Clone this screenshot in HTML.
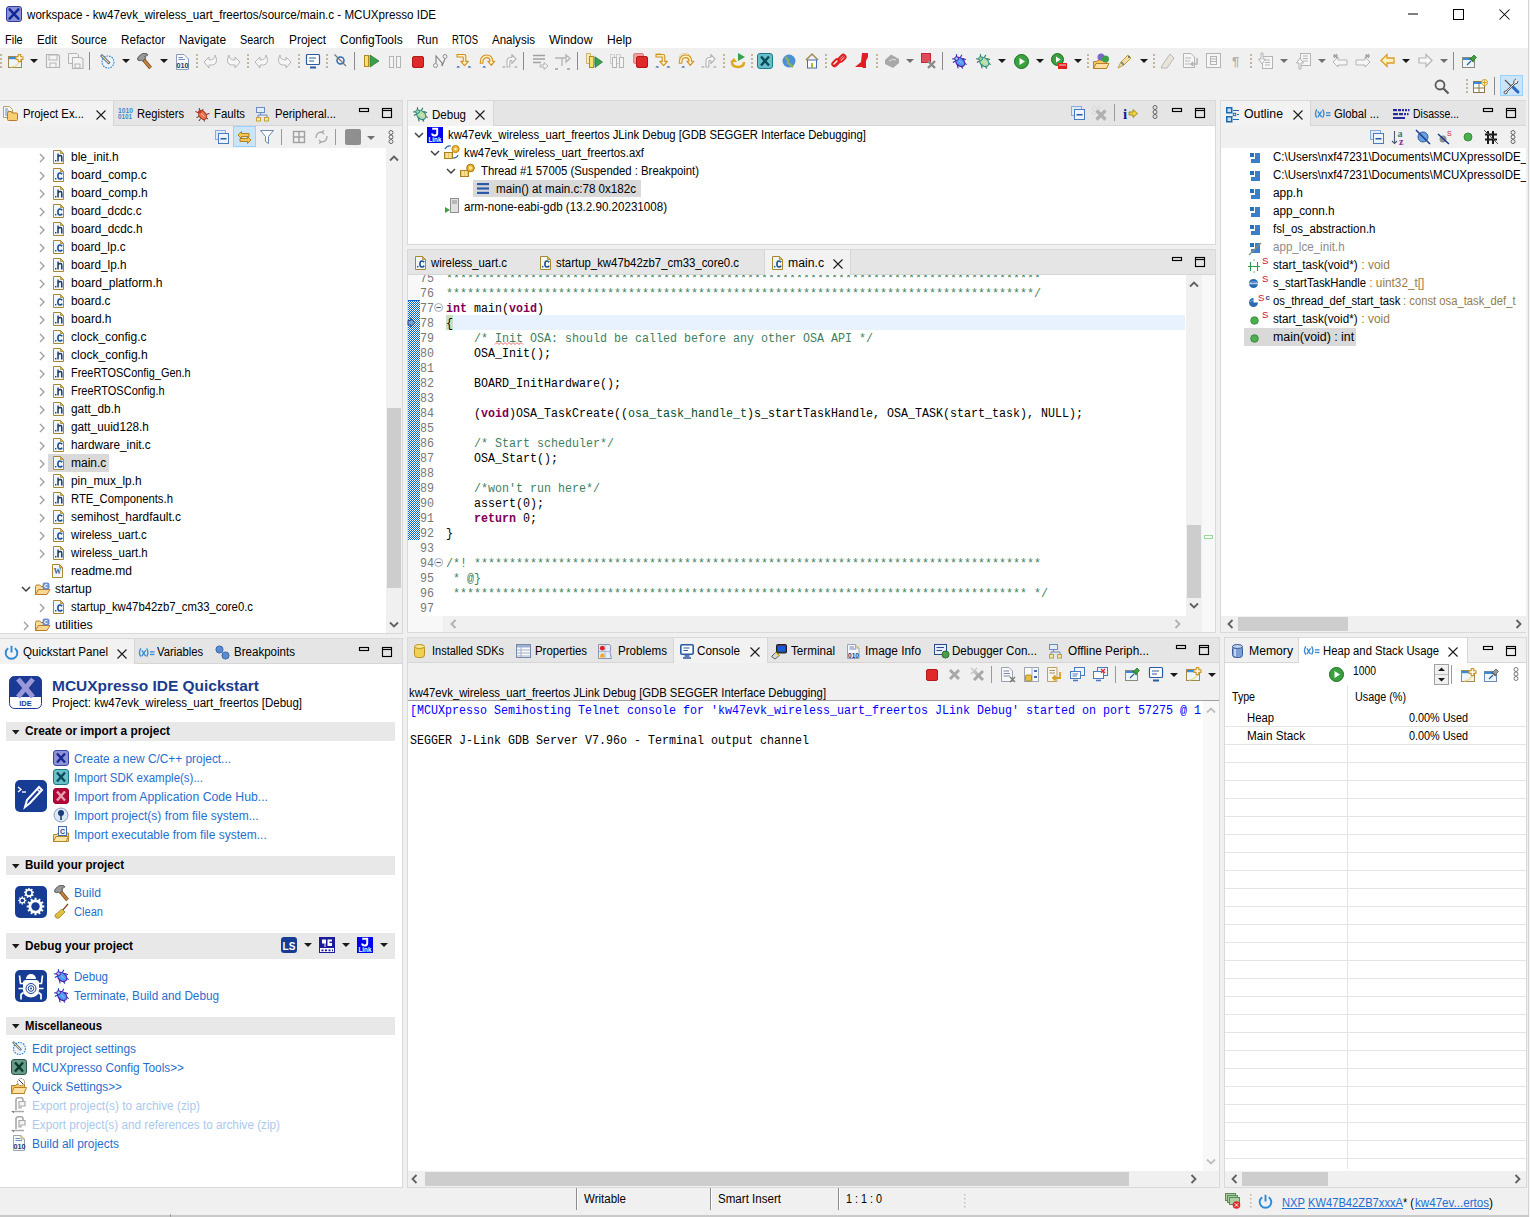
<!DOCTYPE html>
<html><head><meta charset="utf-8"><title>MCUXpresso IDE</title>
<style>
html,body{margin:0;padding:0;}
body{width:1530px;height:1217px;position:relative;overflow:hidden;background:#f0f0f0;font-family:"Liberation Sans",sans-serif;}
body>div,body>svg{position:absolute;}
.t{white-space:pre;line-height:1;transform-origin:0 0;}
svg{overflow:visible;}
</style></head><body>
<div style="left:0px;top:0px;width:1530px;height:48px;background:#ffffff;"></div>
<svg style="left:6px;top:6px;" width="16" height="16" viewBox="0 0 16 16"><rect x="0.5" y="0.5" width="15" height="15" rx="2.5" fill="#8c92d4" stroke="#2c3a9a"/><path d="M3.6 3.4 L12.4 12.6 M12.4 3.4 L3.6 12.6" stroke="#10289a" stroke-width="2.5" stroke-linecap="round"/></svg>
<div class="t" style="left:27px;top:8.84px;font-size:12px;color:#000;font-family:'Liberation Sans', sans-serif;transform:scaleX(0.9674);">workspace - kw47evk_wireless_uart_freertos/source/main.c - MCUXpresso IDE</div>
<svg style="left:1408px;top:13px;" width="10" height="2" viewBox="0 0 10 2"><rect y="0.5" width="10" height="1" fill="#000"/></svg>
<svg style="left:1453px;top:9px;" width="11" height="11" viewBox="0 0 11 11"><rect x="0.5" y="0.5" width="10" height="10" fill="none" stroke="#000"/></svg>
<svg style="left:1499px;top:9px;" width="11" height="11" viewBox="0 0 11 11"><path d="M0.5 0.5 L10.5 10.5 M10.5 0.5 L0.5 10.5" stroke="#000" stroke-width="1.05"/></svg>
<div class="t" style="left:5px;top:33.84px;font-size:12px;color:#000;font-family:'Liberation Sans', sans-serif;transform:scaleX(0.9154);">File</div>
<div class="t" style="left:37px;top:33.84px;font-size:12px;color:#000;font-family:'Liberation Sans', sans-serif;transform:scaleX(0.9672);">Edit</div>
<div class="t" style="left:71px;top:33.84px;font-size:12px;color:#000;font-family:'Liberation Sans', sans-serif;transform:scaleX(0.9390);">Source</div>
<div class="t" style="left:121px;top:33.84px;font-size:12px;color:#000;font-family:'Liberation Sans', sans-serif;transform:scaleX(0.9703);">Refactor</div>
<div class="t" style="left:179px;top:33.84px;font-size:12px;color:#000;font-family:'Liberation Sans', sans-serif;transform:scaleX(0.9924);">Navigate</div>
<div class="t" style="left:240px;top:33.84px;font-size:12px;color:#000;font-family:'Liberation Sans', sans-serif;transform:scaleX(0.9022);">Search</div>
<div class="t" style="left:289px;top:33.84px;font-size:12px;color:#000;font-family:'Liberation Sans', sans-serif;transform:scaleX(0.9907);">Project</div>
<div class="t" style="left:340px;top:33.84px;font-size:12px;color:#000;font-family:'Liberation Sans', sans-serif;">ConfigTools</div>
<div class="t" style="left:417px;top:33.84px;font-size:12px;color:#000;font-family:'Liberation Sans', sans-serif;transform:scaleX(0.9540);">Run</div>
<div class="t" style="left:452px;top:33.84px;font-size:12px;color:#000;font-family:'Liberation Sans', sans-serif;transform:scaleX(0.7903);">RTOS</div>
<div class="t" style="left:492px;top:33.84px;font-size:12px;color:#000;font-family:'Liberation Sans', sans-serif;transform:scaleX(0.9623);">Analysis</div>
<div class="t" style="left:549px;top:33.84px;font-size:12px;color:#000;font-family:'Liberation Sans', sans-serif;transform:scaleX(1.0192);">Window</div>
<div class="t" style="left:607px;top:33.84px;font-size:12px;color:#000;font-family:'Liberation Sans', sans-serif;transform:scaleX(1.0049);">Help</div>
<svg style="left:0px;top:54px;" width="2" height="16" viewBox="0 0 2 16"><rect x="0" y="0" width="2" height="2" fill="#c2b59a"/><rect x="0" y="4" width="2" height="2" fill="#c2b59a"/><rect x="0" y="8" width="2" height="2" fill="#c2b59a"/><rect x="0" y="12" width="2" height="2" fill="#c2b59a"/></svg>
<svg style="left:8px;top:54px;" width="16" height="15" viewBox="0 0 16 15"><rect x="0.5" y="2.5" width="13" height="11" fill="#eef6fc" stroke="#a08a4a"/><rect x="1" y="3" width="12" height="2.2" fill="#3a8ad8"/><path d="M3 13 Q10 12.5 12 6" fill="none" stroke="#f0dc98" stroke-width="1.2"/><path d="M10.2 0.6 H12.8 V2.8 H15 V5.4 H12.8 V7.6 H10.2 V5.4 H8 V2.8 H10.2 Z" fill="#fffbe8" stroke="#c8982a" stroke-width="1.1" stroke-linejoin="round"/></svg>
<svg style="left:30px;top:59px;" width="8" height="4" viewBox="0 0 8 4"><path d="M0 0 H8 L4 4 Z" fill="#1a1a1a"/></svg>
<svg style="left:45px;top:53px;" width="16" height="16" viewBox="0 0 16 16"><path d="M1.5 1.5 H13 L14.5 3 V14.5 H1.5 Z" fill="#f4f4f4" stroke="#b4b4b4" stroke-width="1.2"/><rect x="4" y="2" width="8" height="5" fill="none" stroke="#b4b4b4"/><rect x="5" y="10" width="6" height="4.5" fill="none" stroke="#b4b4b4"/></svg>
<svg style="left:68px;top:53px;" width="16" height="16" viewBox="0 0 16 16"><path d="M0.5 0.5 H9 L10.5 2 V10.5 H0.5 Z" fill="#f4f4f4" stroke="#b4b4b4"/><path d="M4.5 4.5 H13 L15 6 V15.5 H4.5 Z" fill="#f4f4f4" stroke="#b4b4b4" stroke-width="1.1"/><rect x="7" y="11" width="5" height="4" fill="none" stroke="#b4b4b4"/></svg>
<div style="left:89px;top:52px;width:1px;height:18px;background:#8a8a8a;"></div>
<svg style="left:100px;top:54px;" width="15" height="15" viewBox="0 0 15 15"><circle cx="8" cy="8" r="6" fill="#eef4fa" stroke="#3a8ad0" stroke-width="1.2" stroke-dasharray="1.6 1"/><path d="M1 1 L9.5 9.5" stroke="#2a4a8a" stroke-width="2.6"/><path d="M1.5 1.5 L9 9" stroke="#f0e090" stroke-width="1.2"/></svg>
<svg style="left:122px;top:59px;" width="8" height="4" viewBox="0 0 8 4"><path d="M0 0 H8 L4 4 Z" fill="#1a1a1a"/></svg>
<svg style="left:137px;top:53px;" width="17" height="17" viewBox="0 0 17 17"><path d="M6.5 6.5 L13.5 15" stroke="#7a4a1a" stroke-width="3.6"/><path d="M6.5 6.5 L13.5 15" stroke="#c08040" stroke-width="2.2"/><path d="M0.8 7 Q0 5 2 3.2 L4.8 0.9 Q7 0.2 10 0.8 L11 1.8 Q9.5 3.2 7.8 3.4 L8.6 5.2 L5.6 8.2 L4.2 7 Q2.5 8.4 0.8 7 Z" fill="#9a9a9a" stroke="#4a4a4a" stroke-width="0.9"/></svg>
<svg style="left:160px;top:59px;" width="8" height="4" viewBox="0 0 8 4"><path d="M0 0 H8 L4 4 Z" fill="#1a1a1a"/></svg>
<svg style="left:176px;top:54px;" width="13" height="16" viewBox="0 0 13 16"><path d="M0.5 0.5 H8 L12.5 5 V15.5 H0.5 Z" fill="#fafafa" stroke="#8a9ab8"/><path d="M2.5 3.5 H7 M2.5 5.5 H9" stroke="#6a8ac0"/><text x="0.5" y="14" font-size="7.5" font-weight="bold" font-family="Liberation Sans" fill="#1a3a6a" textLength="12" lengthAdjust="spacingAndGlyphs">010</text></svg>
<svg style="left:196px;top:54px;" width="2" height="16" viewBox="0 0 2 16"><rect x="0" y="0" width="2" height="2" fill="#c2b59a"/><rect x="0" y="4" width="2" height="2" fill="#c2b59a"/><rect x="0" y="8" width="2" height="2" fill="#c2b59a"/><rect x="0" y="12" width="2" height="2" fill="#c2b59a"/></svg>
<svg style="left:203px;top:53px;" width="16" height="16" viewBox="0 0 16 16"><path d="M1 9 L6 4 V7 Q12 7 12 2 Q15 8 12 11 Q10 12.5 6 12 V15 Z" fill="#f6f6f6" stroke="#b4b4b4"/></svg>
<svg style="left:225px;top:53px;" width="16" height="16" viewBox="0 0 16 16"><path d="M15 9 L10 4 V7 Q4 7 4 2 Q1 8 4 11 Q6 12.5 10 12 V15 Z" fill="#f6f6f6" stroke="#b4b4b4"/></svg>
<svg style="left:247px;top:54px;" width="2" height="16" viewBox="0 0 2 16"><rect x="0" y="0" width="2" height="2" fill="#c2b59a"/><rect x="0" y="4" width="2" height="2" fill="#c2b59a"/><rect x="0" y="8" width="2" height="2" fill="#c2b59a"/><rect x="0" y="12" width="2" height="2" fill="#c2b59a"/></svg>
<svg style="left:254px;top:53px;" width="16" height="16" viewBox="0 0 16 16"><path d="M1 9 L6 4 V7 Q12 7 12 2 Q15 8 12 11 Q10 12.5 6 12 V15 Z" fill="#f6f6f6" stroke="#b4b4b4"/></svg>
<svg style="left:276px;top:53px;" width="16" height="16" viewBox="0 0 16 16"><path d="M15 9 L10 4 V7 Q4 7 4 2 Q1 8 4 11 Q6 12.5 10 12 V15 Z" fill="#f6f6f6" stroke="#b4b4b4"/></svg>
<svg style="left:298px;top:54px;" width="2" height="16" viewBox="0 0 2 16"><rect x="0" y="0" width="2" height="2" fill="#c2b59a"/><rect x="0" y="4" width="2" height="2" fill="#c2b59a"/><rect x="0" y="8" width="2" height="2" fill="#c2b59a"/><rect x="0" y="12" width="2" height="2" fill="#c2b59a"/></svg>
<svg style="left:306px;top:54px;" width="14" height="15" viewBox="0 0 14 15"><rect x="0.5" y="0.5" width="13" height="10" rx="1" fill="#fff" stroke="#2a5aa0" stroke-width="1.2"/><path d="M3 4 H10 M3 7 H8" stroke="#2a5aa0"/><path d="M4 13.5 H10" stroke="#2a5aa0" stroke-width="2"/></svg>
<svg style="left:326px;top:54px;" width="2" height="16" viewBox="0 0 2 16"><rect x="0" y="0" width="2" height="2" fill="#c2b59a"/><rect x="0" y="4" width="2" height="2" fill="#c2b59a"/><rect x="0" y="8" width="2" height="2" fill="#c2b59a"/><rect x="0" y="12" width="2" height="2" fill="#c2b59a"/></svg>
<svg style="left:334px;top:54px;" width="13" height="13" viewBox="0 0 13 13"><circle cx="6.5" cy="6.5" r="3.5" fill="none" stroke="#2a6ab8" stroke-width="1.5"/><path d="M0.5 0.5 L12 12" stroke="#7a7a7a" stroke-width="1.2"/></svg>
<div style="left:354px;top:52px;width:1px;height:18px;background:#8a8a8a;"></div>
<svg style="left:364px;top:54px;" width="16" height="14" viewBox="0 0 16 14"><rect x="0.5" y="1.5" width="4" height="11" fill="#f8e070" stroke="#b08a20"/><path d="M6 1 L15 7 L6 13 Z" fill="#3aa050" stroke="#1a7030" stroke-width="0.7"/></svg>
<svg style="left:389px;top:56px;" width="12" height="12" viewBox="0 0 12 12"><rect x="0.5" y="0.5" width="4" height="11" fill="#f4f4f4" stroke="#b4b4b4"/><rect x="7.5" y="0.5" width="4" height="11" fill="#f4f4f4" stroke="#b4b4b4"/></svg>
<svg style="left:412px;top:56px;" width="12" height="12" viewBox="0 0 12 12"><rect x="0.5" y="0.5" width="11" height="11" rx="1.5" fill="#e02a2a" stroke="#b01a1a"/></svg>
<svg style="left:433px;top:54px;" width="15" height="14" viewBox="0 0 15 14"><circle cx="2.5" cy="11.5" r="2" fill="none" stroke="#909090"/><circle cx="12" cy="2.5" r="2" fill="none" stroke="#909090"/><path d="M3 9 V2 L9 9 V12 L12 5" fill="none" stroke="#808080" stroke-width="1.1"/></svg>
<svg style="left:456px;top:53px;" width="16" height="16" viewBox="0 0 16 16"><path d="M1 1.5 H8.2 Q9.8 1.5 9.8 3.1 V8.4 H12.4 L8.6 12.6 L4.8 8.4 H7.2 V4 H1 Z" fill="#fff0c0" stroke="#d09020" stroke-width="1.1" stroke-linejoin="round"/><path d="M0.3 14.6 Q2.2 11.4 4.1 14.6 Z M11.5 14.6 Q13.4 11.4 15.3 14.6 Z" fill="#2a5a9a"/></svg>
<svg style="left:479px;top:53px;" width="16" height="16" viewBox="0 0 16 16"><path d="M1.2 10.2 Q1.2 2 7.6 2 Q13.6 2 13.6 8.2 H15.8 L12.3 12.4 L8.8 8.2 H11 Q11 4.6 7.6 4.6 Q3.8 4.6 3.8 10.2 Z" fill="#fff0c0" stroke="#d09020" stroke-width="1.1" stroke-linejoin="round"/><path d="M3.3 14.6 Q5.2 11.4 7.1 14.6 Z" fill="#2a5a9a"/></svg>
<svg style="left:502px;top:53px;" width="16" height="16" viewBox="0 0 16 16"><path d="M5 14 V8 Q5 4.5 8.5 4.5 H9.8 V1.5 L14 6 L9.8 10.5 V7.3 H8.8 Q7.8 7.3 7.8 8.3 V14 Z" fill="#fafafa" stroke="#b4b4b4" stroke-width="1.1" stroke-linejoin="round"/><path d="M0 14.6 Q1.9 11.4 3.8 14.6 Z M12 14.6 Q13.9 11.4 15.8 14.6 Z" fill="#a8a8a8"/></svg>
<div style="left:523px;top:52px;width:1px;height:18px;background:#8a8a8a;"></div>
<svg style="left:533px;top:54px;" width="16" height="16" viewBox="0 0 16 16"><path d="M0 1.5 H12 M0 5 H12 M0 8.5 H8" stroke="#a0a0a0" stroke-width="1.6"/><path d="M7 11 H11 V8.5 L15 12 L11 15.5 V13 H7 Z" fill="#f4f4f4" stroke="#b4b4b4"/></svg>
<svg style="left:555px;top:54px;" width="16" height="16" viewBox="0 0 16 16"><path d="M0 4 H7 V12 M7 4 H11 V1 L15 4.5 L11 8 V5" fill="none" stroke="#b4b4b4" stroke-width="1.3"/><path d="M0 15 H3 M12 15 H15" stroke="#a0a0a0" stroke-width="1.5"/></svg>
<div style="left:577px;top:52px;width:1px;height:18px;background:#8a8a8a;"></div>
<svg style="left:586px;top:53px;" width="17" height="16" viewBox="0 0 17 16"><rect x="0.5" y="0.5" width="4" height="10" fill="#f8e8a0" stroke="#c0a050" opacity="0.7"/><rect x="3.5" y="3.5" width="4" height="11" fill="#f8e070" stroke="#b08a20"/><path d="M7 2 L15 7.5 L7 13 Z" fill="#8ac090" opacity="0.6"/><path d="M9 4 L16.5 9 L9 14.5 Z" fill="#3aa050" stroke="#1a7030" stroke-width="0.7"/></svg>
<svg style="left:610px;top:54px;" width="14" height="14" viewBox="0 0 14 14"><rect x="0.5" y="0.5" width="4" height="9" fill="none" stroke="#d0d0d0"/><rect x="6.5" y="0.5" width="4" height="9" fill="none" stroke="#d0d0d0"/><rect x="2.5" y="3.5" width="4" height="10" fill="#f4f4f4" stroke="#b4b4b4"/><rect x="9.5" y="3.5" width="4" height="10" fill="#f4f4f4" stroke="#b4b4b4"/></svg>
<svg style="left:633px;top:53px;" width="15" height="15" viewBox="0 0 15 15"><rect x="0.5" y="0.5" width="10" height="10" rx="1.5" fill="#f0a0a0" stroke="#e08080"/><rect x="3.5" y="3.5" width="11" height="11" rx="1.5" fill="#e02a2a" stroke="#b01a1a"/></svg>
<svg style="left:655px;top:53px;" width="16" height="16" viewBox="0 0 16 16"><path d="M0.5 0.5 H6" stroke="#d09020" stroke-width="0.8" opacity="0.5"/><path d="M1 1.5 H8.2 Q9.8 1.5 9.8 3.1 V8.4 H12.4 L8.6 12.6 L4.8 8.4 H7.2 V4 H1 Z" fill="#fff0c0" stroke="#d09020" stroke-width="1.1" stroke-linejoin="round"/><path d="M0.3 14.6 Q2.2 11.4 4.1 14.6 Z M11.5 14.6 Q13.4 11.4 15.3 14.6 Z" fill="#2a5a9a"/></svg>
<svg style="left:678px;top:53px;" width="16" height="16" viewBox="0 0 16 16"><path d="M1 6 Q1 0.5 7 0.5 Q12 0.5 13 4" fill="none" stroke="#d09020" stroke-width="0.8" opacity="0.5"/><path d="M1.2 10.2 Q1.2 2 7.6 2 Q13.6 2 13.6 8.2 H15.8 L12.3 12.4 L8.8 8.2 H11 Q11 4.6 7.6 4.6 Q3.8 4.6 3.8 10.2 Z" fill="#fff0c0" stroke="#d09020" stroke-width="1.1" stroke-linejoin="round"/><path d="M3.3 14.6 Q5.2 11.4 7.1 14.6 Z" fill="#2a5a9a"/></svg>
<svg style="left:701px;top:53px;" width="16" height="16" viewBox="0 0 16 16"><path d="M5 14 V8 Q5 4.5 8.5 4.5 H9.8 V1.5 L14 6 L9.8 10.5 V7.3 H8.8 Q7.8 7.3 7.8 8.3 V14 Z" fill="#fafafa" stroke="#b4b4b4" stroke-width="1.1" stroke-linejoin="round"/><path d="M0 14.6 Q1.9 11.4 3.8 14.6 Z M12 14.6 Q13.9 11.4 15.8 14.6 Z" fill="#a8a8a8"/></svg>
<svg style="left:723px;top:54px;" width="2" height="16" viewBox="0 0 2 16"><rect x="0" y="0" width="2" height="2" fill="#c2b59a"/><rect x="0" y="4" width="2" height="2" fill="#c2b59a"/><rect x="0" y="8" width="2" height="2" fill="#c2b59a"/><rect x="0" y="12" width="2" height="2" fill="#c2b59a"/></svg>
<svg style="left:730px;top:53px;" width="16" height="16" viewBox="0 0 16 16"><path d="M2 9 Q2 14 8 14 Q14 14 14 9" fill="none" stroke="#e0a820" stroke-width="2.5"/><path d="M0 9 L4 5 L7 9 Z" fill="#e0a820"/><path d="M8 0 L15 4 L8 8 Z" fill="#3aa050"/></svg>
<svg style="left:751px;top:54px;" width="2" height="16" viewBox="0 0 2 16"><rect x="0" y="0" width="2" height="2" fill="#c2b59a"/><rect x="0" y="4" width="2" height="2" fill="#c2b59a"/><rect x="0" y="8" width="2" height="2" fill="#c2b59a"/><rect x="0" y="12" width="2" height="2" fill="#c2b59a"/></svg>
<svg style="left:757px;top:53px;" width="16" height="16" viewBox="0 0 16 16"><rect x="0.5" y="0.5" width="15" height="15" rx="2.5" fill="#68c0c8" stroke="#1a7a8a"/><path d="M4 3.5 L12 12.5 M12 3.5 L4 12.5" stroke="#0a4a5a" stroke-width="2.4"/></svg>
<svg style="left:782px;top:54px;" width="14" height="14" viewBox="0 0 14 14"><circle cx="7" cy="7" r="6.5" fill="#4a90d8"/><path d="M3 3 Q7 5 6 9 Q9 11 11 13" fill="none" stroke="#8ab060" stroke-width="2.5"/></svg>
<svg style="left:805px;top:53px;" width="14" height="16" viewBox="0 0 14 16"><path d="M1 7 L7 1 L13 7" fill="none" stroke="#a08a5a" stroke-width="1.5"/><rect x="2.5" y="7" width="9" height="8" fill="#fff" stroke="#4a6ab0"/><rect x="6" y="10" width="2" height="5" fill="#a0c030"/></svg>
<svg style="left:825px;top:54px;" width="2" height="16" viewBox="0 0 2 16"><rect x="0" y="0" width="2" height="2" fill="#c2b59a"/><rect x="0" y="4" width="2" height="2" fill="#c2b59a"/><rect x="0" y="8" width="2" height="2" fill="#c2b59a"/><rect x="0" y="12" width="2" height="2" fill="#c2b59a"/></svg>
<svg style="left:831px;top:53px;" width="16" height="16" viewBox="0 0 16 16"><path d="M3 13 L13 3" stroke="#e02020" stroke-width="1.5"/><rect x="0.8" y="7.5" width="8" height="4.5" rx="2.2" transform="rotate(-45 4.8 9.75)" fill="none" stroke="#e02020" stroke-width="2"/><rect x="7" y="3" width="8" height="4.5" rx="2.2" transform="rotate(-45 11 5.25)" fill="none" stroke="#e02020" stroke-width="2"/></svg>
<svg style="left:855px;top:53px;" width="14" height="16" viewBox="0 0 14 16"><path d="M7 0 H13 V4 L11 8 V15 H8 L7 14 H0 L6 9 Z" fill="#e02020"/></svg>
<svg style="left:876px;top:54px;" width="2" height="16" viewBox="0 0 2 16"><rect x="0" y="0" width="2" height="2" fill="#c2b59a"/><rect x="0" y="4" width="2" height="2" fill="#c2b59a"/><rect x="0" y="8" width="2" height="2" fill="#c2b59a"/><rect x="0" y="12" width="2" height="2" fill="#c2b59a"/></svg>
<svg style="left:884px;top:54px;" width="16" height="14" viewBox="0 0 16 14"><path d="M1 6 L7 0.5 L15 5 L15 9 L9 14 L1 10 Z" fill="#a8a8a8"/><path d="M5 7 Q9 4 12 6" stroke="#e0e0e0" fill="none"/></svg>
<svg style="left:906px;top:59px;" width="8" height="4" viewBox="0 0 8 4"><path d="M0 0 H8 L4 4 Z" fill="#707070"/></svg>
<svg style="left:921px;top:53px;" width="15" height="16" viewBox="0 0 15 16"><rect x="0.5" y="0.5" width="9" height="9" fill="#e04a5a" stroke="#c02a3a"/><path d="M7 8 L14 15 M14 8 L7 15" stroke="#8a8a8a" stroke-width="2.4"/></svg>
<div style="left:942px;top:52px;width:1px;height:18px;background:#8a8a8a;"></div>
<svg style="left:952px;top:54px;" width="15" height="15" viewBox="0 0 15 15"><g stroke="#2a40c0" stroke-width="1.2" stroke-linecap="round" fill="none"><path d="M4.5 3 V0.6 M8.5 3.2 L9.6 1.2 M3 4.8 H0.6 M3.5 7 L1.3 8.3 M10.8 4.6 L13.6 5.5 M12 8.6 L14.2 10.4 M5.2 10.2 L6 14 M9.2 11.6 L10.6 14.2"/></g><ellipse cx="8.2" cy="8" rx="3.9" ry="5.2" transform="rotate(-45 8.2 8)" fill="#4a9cf0" stroke="#5a10a8" stroke-width="1.1"/><path d="M7 6.5 L10 9.5" stroke="#ffffff" stroke-opacity="0.45" stroke-width="1"/><circle cx="4.6" cy="4.6" r="1.9" fill="#8ac8ff" stroke="#5a10a8" stroke-width="1"/></svg>
<svg style="left:976px;top:54px;" width="15" height="15" viewBox="0 0 15 15"><g stroke="#3a7a5a" stroke-width="1.2" stroke-linecap="round" fill="none"><path d="M4.5 3 V0.6 M8.5 3.2 L9.6 1.2 M3 4.8 H0.6 M3.5 7 L1.3 8.3 M10.8 4.6 L13.6 5.5 M12 8.6 L14.2 10.4 M5.2 10.2 L6 14 M9.2 11.6 L10.6 14.2"/></g><ellipse cx="8.2" cy="8" rx="3.9" ry="5.2" transform="rotate(-45 8.2 8)" fill="#b8dca8" stroke="#2a8a8a" stroke-width="1.1"/><path d="M7 6.5 L10 9.5" stroke="#ffffff" stroke-opacity="0.45" stroke-width="1"/><circle cx="4.6" cy="4.6" r="1.9" fill="#a0d890" stroke="#2a8a8a" stroke-width="1"/></svg>
<svg style="left:998px;top:59px;" width="8" height="4" viewBox="0 0 8 4"><path d="M0 0 H8 L4 4 Z" fill="#1a1a1a"/></svg>
<svg style="left:1014px;top:54px;" width="15" height="15" viewBox="0 0 15 15"><circle cx="7.5" cy="7.5" r="7" fill="#3aa040" stroke="#1a7020"/><path d="M5.5 4 L11 7.5 L5.5 11 Z" fill="#fff"/></svg>
<svg style="left:1036px;top:59px;" width="8" height="4" viewBox="0 0 8 4"><path d="M0 0 H8 L4 4 Z" fill="#1a1a1a"/></svg>
<svg style="left:1051px;top:53px;" width="17" height="16" viewBox="0 0 17 16"><circle cx="6.5" cy="6.5" r="6" fill="#3aa040" stroke="#1a7020"/><path d="M5 3.5 L9.5 6.5 L5 9.5 Z" fill="#fff"/><rect x="7" y="10" width="9" height="6" fill="#e02020"/><path d="M8 12 H15" stroke="#fff" stroke-width="0.8"/></svg>
<svg style="left:1074px;top:59px;" width="8" height="4" viewBox="0 0 8 4"><path d="M0 0 H8 L4 4 Z" fill="#1a1a1a"/></svg>
<svg style="left:1087px;top:54px;" width="2" height="16" viewBox="0 0 2 16"><rect x="0" y="0" width="2" height="2" fill="#c2b59a"/><rect x="0" y="4" width="2" height="2" fill="#c2b59a"/><rect x="0" y="8" width="2" height="2" fill="#c2b59a"/><rect x="0" y="12" width="2" height="2" fill="#c2b59a"/></svg>
<svg style="left:1093px;top:53px;" width="17" height="16" viewBox="0 0 17 16"><path d="M0.5 8.5 H4 L5 7 H13.5 V15.5 H0.5 Z" fill="#f5c860" stroke="#b8802a"/><path d="M0.5 15.5 L3 10.5 H16 L13.5 15.5 Z" fill="#fbe0a0" stroke="#b8802a"/><circle cx="8" cy="4" r="3.5" fill="#7a6ac8"/><circle cx="12.5" cy="6" r="3.5" fill="#3aa050"/></svg>
<svg style="left:1117px;top:53px;" width="16" height="16" viewBox="0 0 16 16"><path d="M1 15 L4 9 L11 2 L14 5 L7 12 Z" fill="#f0e0a0" stroke="#c0a050"/><path d="M4 9 L7 12" stroke="#8a8a8a" stroke-width="2"/><circle cx="12" cy="4" r="1" fill="#5a5a5a"/></svg>
<svg style="left:1140px;top:59px;" width="8" height="4" viewBox="0 0 8 4"><path d="M0 0 H8 L4 4 Z" fill="#1a1a1a"/></svg>
<svg style="left:1153px;top:54px;" width="2" height="16" viewBox="0 0 2 16"><rect x="0" y="0" width="2" height="2" fill="#c2b59a"/><rect x="0" y="4" width="2" height="2" fill="#c2b59a"/><rect x="0" y="8" width="2" height="2" fill="#c2b59a"/><rect x="0" y="12" width="2" height="2" fill="#c2b59a"/></svg>
<svg style="left:1159px;top:53px;" width="16" height="16" viewBox="0 0 16 16"><path d="M2 15 H8 L15 5 L11 1 L4 11 Z" fill="#e8e4d8" stroke="#b8b8b8"/></svg>
<svg style="left:1183px;top:53px;" width="16" height="16" viewBox="0 0 16 16"><path d="M0.5 0.5 H8 L11.5 4 V14.5 H0.5 Z" fill="#f6f6f6" stroke="#b4b4b4"/><path d="M2 5 H8 M2 8 H7 M2 11 H7" stroke="#b4b4b4"/><path d="M14 5 V11 H8 M10 9 L8 11 L10 13" fill="none" stroke="#b4b4b4" stroke-width="1.5"/></svg>
<svg style="left:1206px;top:53px;" width="15" height="16" viewBox="0 0 15 16"><rect x="0.5" y="0.5" width="14" height="14" fill="#f6f6f6" stroke="#b4b4b4"/><rect x="4.5" y="3.5" width="6" height="8" fill="none" stroke="#b4b4b4"/><path d="M5 6 H10 M5 8.5 H10" stroke="#b4b4b4"/></svg>
<svg style="left:1232px;top:55px;" width="9" height="12" viewBox="0 0 9 12"><text x="0" y="11" font-size="13" font-family="Liberation Sans" font-weight="bold" fill="#b0b0b0">¶</text></svg>
<svg style="left:1250px;top:54px;" width="2" height="16" viewBox="0 0 2 16"><rect x="0" y="0" width="2" height="2" fill="#c2b59a"/><rect x="0" y="4" width="2" height="2" fill="#c2b59a"/><rect x="0" y="8" width="2" height="2" fill="#c2b59a"/><rect x="0" y="12" width="2" height="2" fill="#c2b59a"/></svg>
<svg style="left:1258px;top:53px;" width="15" height="16" viewBox="0 0 15 16"><rect x="4.5" y="3.5" width="10" height="12" fill="#f6f6f6" stroke="#b4b4b4"/><path d="M7 7 H12 M7 9.5 H12 M7 12 H12" stroke="#b4b4b4"/><path d="M3 0 V6 H0.5 L4 11 L7.5 6 H5 V0 Z" fill="#f6f6f6" stroke="#b4b4b4"/></svg>
<svg style="left:1280px;top:59px;" width="8" height="4" viewBox="0 0 8 4"><path d="M0 0 H8 L4 4 Z" fill="#707070"/></svg>
<svg style="left:1296px;top:53px;" width="15" height="16" viewBox="0 0 15 16"><rect x="4.5" y="0.5" width="10" height="12" fill="#f6f6f6" stroke="#b4b4b4"/><path d="M7 3 H12 M7 5.5 H12 M7 8 H12" stroke="#b4b4b4"/><path d="M3 16 V10 H0.5 L4 5 L7.5 10 H5 V16 Z" fill="#f6f6f6" stroke="#b4b4b4"/></svg>
<svg style="left:1318px;top:59px;" width="8" height="4" viewBox="0 0 8 4"><path d="M0 0 H8 L4 4 Z" fill="#707070"/></svg>
<svg style="left:1332px;top:53px;" width="16" height="16" viewBox="0 0 16 16"><path d="M1 9 L6 4 V7 H15 V12 H6 V14 Z" fill="#f6f6f6" stroke="#b4b4b4"/><path d="M2 1 L5 5 M5 1 L2 5 M1 3 H6" stroke="#909090"/></svg>
<svg style="left:1355px;top:53px;" width="16" height="16" viewBox="0 0 16 16"><path d="M15 9 L10 4 V7 H1 V12 H10 V14 Z" fill="#f6f6f6" stroke="#b4b4b4"/><path d="M11 1 L14 5 M14 1 L11 5 M10 3 H15" stroke="#909090"/></svg>
<svg style="left:1380px;top:53px;" width="15" height="15" viewBox="0 0 15 15"><path d="M1 7.5 L7 1.5 V5 H14 V10 H7 V13.5 Z" fill="#fff0c0" stroke="#d8a020" stroke-width="1.3"/></svg>
<svg style="left:1402px;top:59px;" width="8" height="4" viewBox="0 0 8 4"><path d="M0 0 H8 L4 4 Z" fill="#1a1a1a"/></svg>
<svg style="left:1418px;top:53px;" width="15" height="15" viewBox="0 0 15 15"><path d="M14 7.5 L8 1.5 V5 H1 V10 H8 V13.5 Z" fill="#f8f8f8" stroke="#b4b4b4" stroke-width="1.2"/></svg>
<svg style="left:1440px;top:59px;" width="8" height="4" viewBox="0 0 8 4"><path d="M0 0 H8 L4 4 Z" fill="#707070"/></svg>
<div style="left:1453px;top:52px;width:1px;height:18px;background:#8a8a8a;"></div>
<svg style="left:1462px;top:54px;" width="15" height="15" viewBox="0 0 15 15"><rect x="0.5" y="3.5" width="12" height="10" fill="#eef6fc" stroke="#8a8a7a"/><rect x="1" y="4" width="11" height="2" fill="#3a8ad8"/><path d="M5 11 L9 7" stroke="#2a5a9a" stroke-width="1.1"/><path d="M8.5 4.5 L12 1 L14.5 3.5 L11 7 Z" fill="#3aa040" stroke="#2a7a2a" stroke-width="0.8"/><path d="M7.5 3.8 L11.7 8" stroke="#2a7a2a" stroke-width="1.2"/></svg>
<svg style="left:1434px;top:79px;" width="16" height="16" viewBox="0 0 16 16"><circle cx="6" cy="6" r="4.5" fill="none" stroke="#5a5a5a" stroke-width="1.8"/><path d="M9.5 9.5 L14.5 14.5" stroke="#5a5a5a" stroke-width="2.2"/></svg>
<svg style="left:1466px;top:79px;" width="2" height="16" viewBox="0 0 2 16"><rect x="0" y="0" width="2" height="2" fill="#c2b59a"/><rect x="0" y="4" width="2" height="2" fill="#c2b59a"/><rect x="0" y="8" width="2" height="2" fill="#c2b59a"/><rect x="0" y="12" width="2" height="2" fill="#c2b59a"/></svg>
<svg style="left:1473px;top:79px;" width="15" height="15" viewBox="0 0 15 15"><rect x="0.5" y="2.5" width="11" height="11" fill="#fff" stroke="#8a7a4a"/><rect x="1" y="3" width="10" height="2" fill="#3a8ad8"/><path d="M6 5 V13 M1 9 H11" stroke="#8a7a4a"/><circle cx="11.5" cy="3.5" r="3" fill="#fff4c0" stroke="#c8a030"/><path d="M11.5 1.5 V5.5 M9.5 3.5 H13.5" stroke="#c8a030"/></svg>
<div style="left:1494px;top:77px;width:1px;height:18px;background:#8a8a8a;"></div>
<div style="left:1500px;top:75px;width:23px;height:21px;background:#cce4f7;box-shadow:inset 0 0 0 1px #99d1ff;"></div>
<svg style="left:1503px;top:78px;" width="17" height="16" viewBox="0 0 17 16"><path d="M2 2 L14 14" stroke="#5a5a5a" stroke-width="1.2"/><path d="M9 8 L15 14" stroke="#2a6ad0" stroke-width="3" stroke-linecap="round"/><path d="M13 1 A3 3 0 0 0 11 5 L3 13 A1.5 1.5 0 1 0 4 14 L12 6 A3 3 0 0 0 15 3" fill="#e8e8e8" stroke="#5a5a5a"/></svg>
<div style="left:0px;top:100px;width:403px;height:534px;background:#d9d9d9;"></div>
<div style="left:1px;top:101px;width:401px;height:532px;background:#ffffff;"></div>
<div style="left:1px;top:101px;width:401px;height:24px;background:#e5e5e5;"></div>
<div style="left:-1px;top:100px;width:404px;height:534px;background:#d9d9d9;"></div>
<div style="left:0px;top:101px;width:402px;height:532px;background:#ffffff;"></div>
<div style="left:0px;top:101px;width:402px;height:25px;background:#e5e5e5;"></div>
<div style="left:0px;top:101px;width:113px;height:25px;background:#f2f2f2;"></div>
<div style="left:113px;top:101px;width:1px;height:25px;background:#d6d6d6;"></div>
<div style="left:113px;top:125px;width:289px;height:1px;background:#d6d6d6;"></div>
<div style="left:0px;top:126px;width:402px;height:22px;background:#f0f0f0;"></div>
<svg style="left:3px;top:106px;" width="16" height="16" viewBox="0 0 16 16"><path d="M0.5 0.5 H6.5 L9.5 3.5 V11.5 H0.5 Z" fill="#f8f8fa" stroke="#b8a070"/><path d="M2 3 H5 M2 5 H6 M2 7 H6 M2 9 H5" stroke="#6a8ad0"/><path d="M4.5 7.5 Q4.5 5.5 6 5.5 H8 Q9 5.5 9 7 H13.5 Q14.5 7 14.5 8 V13.5 Q14.5 14.5 13.5 14.5 H5.5 Q4.5 14.5 4.5 13.5 Z" fill="#f8d070" stroke="#b8782a"/></svg>
<div class="t" style="left:23px;top:107.84px;font-size:12px;color:#000;font-family:'Liberation Sans', sans-serif;transform:scaleX(0.9430);">Project Ex...</div>
<svg style="left:96px;top:110px;" width="10" height="10" viewBox="0 0 10 10"><path d="M0.5 0.5 L9.5 9.5 M9.5 0.5 L0.5 9.5" stroke="#1a1a1a" stroke-width="1.1"/></svg>
<svg style="left:118px;top:108px;" width="15" height="12" viewBox="0 0 15 12"><text x="0" y="5" font-size="7" font-family="Liberation Sans" fill="#3a8ac8" font-weight="bold" textLength="15" lengthAdjust="spacingAndGlyphs">1010</text><text x="0" y="11.2" font-size="7" font-family="Liberation Sans" fill="#3a8ac8" font-weight="bold" textLength="14" lengthAdjust="spacingAndGlyphs">0101</text></svg>
<div class="t" style="left:137px;top:107.84px;font-size:12px;color:#000;font-family:'Liberation Sans', sans-serif;transform:scaleX(0.9274);">Registers</div>
<svg style="left:195px;top:107px;" width="15" height="15" viewBox="0 0 15 15"><g stroke="#6a2a1a" stroke-width="1" fill="none"><path d="M4 1 L5.5 4.5 M8 2 L7.5 4 M0.5 4.5 L4 6 M14.5 6.5 L11 7.5 M1.5 10.5 L4 9.5 M13 12 L10.5 10.5 M4 14 L5.5 11.5 M9.5 14.5 L8.5 12"/></g><ellipse cx="7.5" cy="8" rx="3.4" ry="5" transform="rotate(-40 7.5 8)" fill="#f07050" stroke="#a03a20"/><path d="M6 6.5 L9.5 9.5" stroke="#ffc0a0" stroke-width="1"/><circle cx="4.8" cy="4.8" r="1.7" fill="#c03a20"/></svg>
<div class="t" style="left:214px;top:107.84px;font-size:12px;color:#000;font-family:'Liberation Sans', sans-serif;transform:scaleX(0.9487);">Faults</div>
<svg style="left:256px;top:107px;" width="14" height="15" viewBox="0 0 14 15"><rect x="0.5" y="0.5" width="8" height="5" fill="#e4ecf8" stroke="#6a8ac0"/><path d="M4.5 5.5 V8 M2 10.5 V8 H11 V10.5" stroke="#6a8ac0" fill="none"/><rect x="0.5" y="10.5" width="4" height="3.5" fill="#f8e8a0" stroke="#c0a040"/><rect x="8.5" y="10.5" width="4" height="3.5" fill="#f8e8a0" stroke="#c0a040"/></svg>
<div class="t" style="left:275px;top:107.84px;font-size:12px;color:#000;font-family:'Liberation Sans', sans-serif;transform:scaleX(0.9429);">Peripheral...</div>
<svg style="left:359px;top:108px;" width="11" height="5" viewBox="0 0 11 5"><rect x="0.5" y="0.5" width="9" height="3" fill="none" stroke="#000" stroke-width="1.15"/></svg>
<svg style="left:382px;top:108px;" width="11" height="11" viewBox="0 0 11 11"><rect x="0.5" y="0.5" width="9" height="9" fill="none" stroke="#000" stroke-width="1.15"/><path d="M0.5 2.5 H9.5" stroke="#000" stroke-width="1.15"/></svg>
<svg style="left:215px;top:130px;" width="14" height="14" viewBox="0 0 14 14"><rect x="0.5" y="0.5" width="10" height="9" fill="#dfeaf8" stroke="#8aaad8"/><rect x="3.5" y="3.5" width="10" height="10" fill="#eef4fc" stroke="#4a7ac0"/><rect x="5.5" y="8" width="6" height="1.5" fill="#2a5aa0"/></svg>
<div style="left:233px;top:126px;width:23px;height:21px;background:#cce4f7;box-shadow:inset 0 0 0 1px #99d1ff;"></div>
<svg style="left:237px;top:130px;" width="15" height="15" viewBox="0 0 15 15"><path d="M1 5 L4.5 1.5 V3.5 H12 V6.5 H4.5 V8.5 Z" fill="#f3c650" stroke="#a87a10" stroke-width="0.9"/><path d="M14 10 L10.5 6.5 V8.5 H3 V11.5 H10.5 V13.5 Z" fill="#f3c650" stroke="#a87a10" stroke-width="0.9"/></svg>
<svg style="left:260px;top:130px;" width="14" height="14" viewBox="0 0 14 14"><path d="M0.5 0.5 H13.5 L8.5 6.5 V13.5 L5.5 11.5 V6.5 Z" fill="#ffffff" stroke="#6a8ab0"/></svg>
<div style="left:281px;top:129px;width:1px;height:16px;background:#9a9a9a;"></div>
<svg style="left:292px;top:130px;" width="14" height="14" viewBox="0 0 14 14"><rect x="1.5" y="1.5" width="11" height="11" fill="none" stroke="#a0a0a0" stroke-width="1.4"/><path d="M7 1.5 V12.5 M1.5 7 H12.5" stroke="#a0a0a0" stroke-width="1.4"/></svg>
<svg style="left:314px;top:130px;" width="15" height="14" viewBox="0 0 15 14"><path d="M2 8 Q2 2 8 2 L10 0.5 M8 2 L10 4 M13 6 Q13 12 7 12 L5 13.5 M7 12 L5 10" fill="none" stroke="#a8a8a8" stroke-width="1.3"/></svg>
<div style="left:335px;top:129px;width:1px;height:16px;background:#9a9a9a;"></div>
<div style="left:345px;top:129px;width:16px;height:16px;background:#8f8f8f;border-radius:2px;"></div>
<svg style="left:367px;top:136px;" width="8" height="4" viewBox="0 0 8 4"><path d="M0 0 H8 L4 4 Z" fill="#707070"/></svg>
<svg style="left:388px;top:130px;" width="6" height="15" viewBox="0 0 6 15"><circle cx="3" cy="2.5" r="2" fill="none" stroke="#666" stroke-width="1"/><circle cx="3" cy="7.0" r="2" fill="none" stroke="#666" stroke-width="1"/><circle cx="3" cy="11.5" r="2" fill="none" stroke="#666" stroke-width="1"/></svg>
<svg style="left:39px;top:153px;" width="6" height="10" viewBox="0 0 6 10"><path d="M1 1 L5 5 L1 9" fill="none" stroke="#a0a0a0" stroke-width="1.4"/></svg>
<svg style="left:53px;top:150px;" width="12" height="15" viewBox="0 0 12 15"><path d="M0.5 0.5 H7.5 L10.5 3.5 V13.5 H0.5 Z" fill="#f2f6fd" stroke="#a8882e"/><path d="M7.5 0.5 V3.5 H10.5 Z" fill="#d9bc68" stroke="#a8882e" stroke-width="0.8"/><rect x="2" y="10" width="1.4" height="1.4" fill="#1a3a6a"/><rect x="4.3" y="3.6" width="1.5" height="7.8" fill="#1a3a6a"/><path d="M5.2 6.6 Q6.2 5.6 7.4 5.6 Q8.8 5.6 8.8 7.2 V11.4" fill="none" stroke="#1a3a6a" stroke-width="1.5"/></svg>
<div class="t" style="left:71px;top:150.84px;font-size:12px;color:#000;font-family:'Liberation Sans', sans-serif;transform:scaleX(0.9931);">ble_init.h</div>
<svg style="left:39px;top:171px;" width="6" height="10" viewBox="0 0 6 10"><path d="M1 1 L5 5 L1 9" fill="none" stroke="#a0a0a0" stroke-width="1.4"/></svg>
<svg style="left:53px;top:168px;" width="12" height="15" viewBox="0 0 12 15"><path d="M0.5 0.5 H7.5 L10.5 3.5 V13.5 H0.5 Z" fill="#f2f6fd" stroke="#a8882e"/><path d="M7.5 0.5 V3.5 H10.5 Z" fill="#d9bc68" stroke="#a8882e" stroke-width="0.8"/><rect x="2" y="10" width="1.4" height="1.4" fill="#1a4f90"/><path d="M9.2 6.2 Q8.4 5 6.9 5 Q4.9 5 4.9 8 Q4.9 11 6.9 11 Q8.4 11 9.2 9.8" fill="none" stroke="#1a4f90" stroke-width="1.6"/></svg>
<div class="t" style="left:71px;top:168.84px;font-size:12px;color:#000;font-family:'Liberation Sans', sans-serif;transform:scaleX(0.9943);">board_comp.c</div>
<svg style="left:39px;top:189px;" width="6" height="10" viewBox="0 0 6 10"><path d="M1 1 L5 5 L1 9" fill="none" stroke="#a0a0a0" stroke-width="1.4"/></svg>
<svg style="left:53px;top:186px;" width="12" height="15" viewBox="0 0 12 15"><path d="M0.5 0.5 H7.5 L10.5 3.5 V13.5 H0.5 Z" fill="#f2f6fd" stroke="#a8882e"/><path d="M7.5 0.5 V3.5 H10.5 Z" fill="#d9bc68" stroke="#a8882e" stroke-width="0.8"/><rect x="2" y="10" width="1.4" height="1.4" fill="#1a3a6a"/><rect x="4.3" y="3.6" width="1.5" height="7.8" fill="#1a3a6a"/><path d="M5.2 6.6 Q6.2 5.6 7.4 5.6 Q8.8 5.6 8.8 7.2 V11.4" fill="none" stroke="#1a3a6a" stroke-width="1.5"/></svg>
<div class="t" style="left:71px;top:186.84px;font-size:12px;color:#000;font-family:'Liberation Sans', sans-serif;">board_comp.h</div>
<svg style="left:39px;top:207px;" width="6" height="10" viewBox="0 0 6 10"><path d="M1 1 L5 5 L1 9" fill="none" stroke="#a0a0a0" stroke-width="1.4"/></svg>
<svg style="left:53px;top:204px;" width="12" height="15" viewBox="0 0 12 15"><path d="M0.5 0.5 H7.5 L10.5 3.5 V13.5 H0.5 Z" fill="#f2f6fd" stroke="#a8882e"/><path d="M7.5 0.5 V3.5 H10.5 Z" fill="#d9bc68" stroke="#a8882e" stroke-width="0.8"/><rect x="2" y="10" width="1.4" height="1.4" fill="#1a4f90"/><path d="M9.2 6.2 Q8.4 5 6.9 5 Q4.9 5 4.9 8 Q4.9 11 6.9 11 Q8.4 11 9.2 9.8" fill="none" stroke="#1a4f90" stroke-width="1.6"/></svg>
<div class="t" style="left:71px;top:204.84px;font-size:12px;color:#000;font-family:'Liberation Sans', sans-serif;transform:scaleX(0.9800);">board_dcdc.c</div>
<svg style="left:39px;top:225px;" width="6" height="10" viewBox="0 0 6 10"><path d="M1 1 L5 5 L1 9" fill="none" stroke="#a0a0a0" stroke-width="1.4"/></svg>
<svg style="left:53px;top:222px;" width="12" height="15" viewBox="0 0 12 15"><path d="M0.5 0.5 H7.5 L10.5 3.5 V13.5 H0.5 Z" fill="#f2f6fd" stroke="#a8882e"/><path d="M7.5 0.5 V3.5 H10.5 Z" fill="#d9bc68" stroke="#a8882e" stroke-width="0.8"/><rect x="2" y="10" width="1.4" height="1.4" fill="#1a3a6a"/><rect x="4.3" y="3.6" width="1.5" height="7.8" fill="#1a3a6a"/><path d="M5.2 6.6 Q6.2 5.6 7.4 5.6 Q8.8 5.6 8.8 7.2 V11.4" fill="none" stroke="#1a3a6a" stroke-width="1.5"/></svg>
<div class="t" style="left:71px;top:222.84px;font-size:12px;color:#000;font-family:'Liberation Sans', sans-serif;transform:scaleX(0.9847);">board_dcdc.h</div>
<svg style="left:39px;top:243px;" width="6" height="10" viewBox="0 0 6 10"><path d="M1 1 L5 5 L1 9" fill="none" stroke="#a0a0a0" stroke-width="1.4"/></svg>
<svg style="left:53px;top:240px;" width="12" height="15" viewBox="0 0 12 15"><path d="M0.5 0.5 H7.5 L10.5 3.5 V13.5 H0.5 Z" fill="#f2f6fd" stroke="#a8882e"/><path d="M7.5 0.5 V3.5 H10.5 Z" fill="#d9bc68" stroke="#a8882e" stroke-width="0.8"/><rect x="2" y="10" width="1.4" height="1.4" fill="#1a4f90"/><path d="M9.2 6.2 Q8.4 5 6.9 5 Q4.9 5 4.9 8 Q4.9 11 6.9 11 Q8.4 11 9.2 9.8" fill="none" stroke="#1a4f90" stroke-width="1.6"/></svg>
<div class="t" style="left:71px;top:240.84px;font-size:12px;color:#000;font-family:'Liberation Sans', sans-serif;transform:scaleX(0.9726);">board_lp.c</div>
<svg style="left:39px;top:261px;" width="6" height="10" viewBox="0 0 6 10"><path d="M1 1 L5 5 L1 9" fill="none" stroke="#a0a0a0" stroke-width="1.4"/></svg>
<svg style="left:53px;top:258px;" width="12" height="15" viewBox="0 0 12 15"><path d="M0.5 0.5 H7.5 L10.5 3.5 V13.5 H0.5 Z" fill="#f2f6fd" stroke="#a8882e"/><path d="M7.5 0.5 V3.5 H10.5 Z" fill="#d9bc68" stroke="#a8882e" stroke-width="0.8"/><rect x="2" y="10" width="1.4" height="1.4" fill="#1a3a6a"/><rect x="4.3" y="3.6" width="1.5" height="7.8" fill="#1a3a6a"/><path d="M5.2 6.6 Q6.2 5.6 7.4 5.6 Q8.8 5.6 8.8 7.2 V11.4" fill="none" stroke="#1a3a6a" stroke-width="1.5"/></svg>
<div class="t" style="left:71px;top:258.84px;font-size:12px;color:#000;font-family:'Liberation Sans', sans-serif;transform:scaleX(0.9787);">board_lp.h</div>
<svg style="left:39px;top:279px;" width="6" height="10" viewBox="0 0 6 10"><path d="M1 1 L5 5 L1 9" fill="none" stroke="#a0a0a0" stroke-width="1.4"/></svg>
<svg style="left:53px;top:276px;" width="12" height="15" viewBox="0 0 12 15"><path d="M0.5 0.5 H7.5 L10.5 3.5 V13.5 H0.5 Z" fill="#f2f6fd" stroke="#a8882e"/><path d="M7.5 0.5 V3.5 H10.5 Z" fill="#d9bc68" stroke="#a8882e" stroke-width="0.8"/><rect x="2" y="10" width="1.4" height="1.4" fill="#1a3a6a"/><rect x="4.3" y="3.6" width="1.5" height="7.8" fill="#1a3a6a"/><path d="M5.2 6.6 Q6.2 5.6 7.4 5.6 Q8.8 5.6 8.8 7.2 V11.4" fill="none" stroke="#1a3a6a" stroke-width="1.5"/></svg>
<div class="t" style="left:71px;top:276.84px;font-size:12px;color:#000;font-family:'Liberation Sans', sans-serif;transform:scaleX(1.0087);">board_platform.h</div>
<svg style="left:39px;top:297px;" width="6" height="10" viewBox="0 0 6 10"><path d="M1 1 L5 5 L1 9" fill="none" stroke="#a0a0a0" stroke-width="1.4"/></svg>
<svg style="left:53px;top:294px;" width="12" height="15" viewBox="0 0 12 15"><path d="M0.5 0.5 H7.5 L10.5 3.5 V13.5 H0.5 Z" fill="#f2f6fd" stroke="#a8882e"/><path d="M7.5 0.5 V3.5 H10.5 Z" fill="#d9bc68" stroke="#a8882e" stroke-width="0.8"/><rect x="2" y="10" width="1.4" height="1.4" fill="#1a4f90"/><path d="M9.2 6.2 Q8.4 5 6.9 5 Q4.9 5 4.9 8 Q4.9 11 6.9 11 Q8.4 11 9.2 9.8" fill="none" stroke="#1a4f90" stroke-width="1.6"/></svg>
<div class="t" style="left:71px;top:294.84px;font-size:12px;color:#000;font-family:'Liberation Sans', sans-serif;transform:scaleX(0.9870);">board.c</div>
<svg style="left:39px;top:315px;" width="6" height="10" viewBox="0 0 6 10"><path d="M1 1 L5 5 L1 9" fill="none" stroke="#a0a0a0" stroke-width="1.4"/></svg>
<svg style="left:53px;top:312px;" width="12" height="15" viewBox="0 0 12 15"><path d="M0.5 0.5 H7.5 L10.5 3.5 V13.5 H0.5 Z" fill="#f2f6fd" stroke="#a8882e"/><path d="M7.5 0.5 V3.5 H10.5 Z" fill="#d9bc68" stroke="#a8882e" stroke-width="0.8"/><rect x="2" y="10" width="1.4" height="1.4" fill="#1a3a6a"/><rect x="4.3" y="3.6" width="1.5" height="7.8" fill="#1a3a6a"/><path d="M5.2 6.6 Q6.2 5.6 7.4 5.6 Q8.8 5.6 8.8 7.2 V11.4" fill="none" stroke="#1a3a6a" stroke-width="1.5"/></svg>
<div class="t" style="left:71px;top:312.84px;font-size:12px;color:#000;font-family:'Liberation Sans', sans-serif;transform:scaleX(0.9952);">board.h</div>
<svg style="left:39px;top:333px;" width="6" height="10" viewBox="0 0 6 10"><path d="M1 1 L5 5 L1 9" fill="none" stroke="#a0a0a0" stroke-width="1.4"/></svg>
<svg style="left:53px;top:330px;" width="12" height="15" viewBox="0 0 12 15"><path d="M0.5 0.5 H7.5 L10.5 3.5 V13.5 H0.5 Z" fill="#f2f6fd" stroke="#a8882e"/><path d="M7.5 0.5 V3.5 H10.5 Z" fill="#d9bc68" stroke="#a8882e" stroke-width="0.8"/><rect x="2" y="10" width="1.4" height="1.4" fill="#1a4f90"/><path d="M9.2 6.2 Q8.4 5 6.9 5 Q4.9 5 4.9 8 Q4.9 11 6.9 11 Q8.4 11 9.2 9.8" fill="none" stroke="#1a4f90" stroke-width="1.6"/></svg>
<div class="t" style="left:71px;top:330.84px;font-size:12px;color:#000;font-family:'Liberation Sans', sans-serif;transform:scaleX(1.0031);">clock_config.c</div>
<svg style="left:39px;top:351px;" width="6" height="10" viewBox="0 0 6 10"><path d="M1 1 L5 5 L1 9" fill="none" stroke="#a0a0a0" stroke-width="1.4"/></svg>
<svg style="left:53px;top:348px;" width="12" height="15" viewBox="0 0 12 15"><path d="M0.5 0.5 H7.5 L10.5 3.5 V13.5 H0.5 Z" fill="#f2f6fd" stroke="#a8882e"/><path d="M7.5 0.5 V3.5 H10.5 Z" fill="#d9bc68" stroke="#a8882e" stroke-width="0.8"/><rect x="2" y="10" width="1.4" height="1.4" fill="#1a3a6a"/><rect x="4.3" y="3.6" width="1.5" height="7.8" fill="#1a3a6a"/><path d="M5.2 6.6 Q6.2 5.6 7.4 5.6 Q8.8 5.6 8.8 7.2 V11.4" fill="none" stroke="#1a3a6a" stroke-width="1.5"/></svg>
<div class="t" style="left:71px;top:348.84px;font-size:12px;color:#000;font-family:'Liberation Sans', sans-serif;transform:scaleX(1.0087);">clock_config.h</div>
<svg style="left:39px;top:369px;" width="6" height="10" viewBox="0 0 6 10"><path d="M1 1 L5 5 L1 9" fill="none" stroke="#a0a0a0" stroke-width="1.4"/></svg>
<svg style="left:53px;top:366px;" width="12" height="15" viewBox="0 0 12 15"><path d="M0.5 0.5 H7.5 L10.5 3.5 V13.5 H0.5 Z" fill="#f2f6fd" stroke="#a8882e"/><path d="M7.5 0.5 V3.5 H10.5 Z" fill="#d9bc68" stroke="#a8882e" stroke-width="0.8"/><rect x="2" y="10" width="1.4" height="1.4" fill="#1a3a6a"/><rect x="4.3" y="3.6" width="1.5" height="7.8" fill="#1a3a6a"/><path d="M5.2 6.6 Q6.2 5.6 7.4 5.6 Q8.8 5.6 8.8 7.2 V11.4" fill="none" stroke="#1a3a6a" stroke-width="1.5"/></svg>
<div class="t" style="left:71px;top:366.84px;font-size:12px;color:#000;font-family:'Liberation Sans', sans-serif;transform:scaleX(0.9087);">FreeRTOSConfig_Gen.h</div>
<svg style="left:39px;top:387px;" width="6" height="10" viewBox="0 0 6 10"><path d="M1 1 L5 5 L1 9" fill="none" stroke="#a0a0a0" stroke-width="1.4"/></svg>
<svg style="left:53px;top:384px;" width="12" height="15" viewBox="0 0 12 15"><path d="M0.5 0.5 H7.5 L10.5 3.5 V13.5 H0.5 Z" fill="#f2f6fd" stroke="#a8882e"/><path d="M7.5 0.5 V3.5 H10.5 Z" fill="#d9bc68" stroke="#a8882e" stroke-width="0.8"/><rect x="2" y="10" width="1.4" height="1.4" fill="#1a3a6a"/><rect x="4.3" y="3.6" width="1.5" height="7.8" fill="#1a3a6a"/><path d="M5.2 6.6 Q6.2 5.6 7.4 5.6 Q8.8 5.6 8.8 7.2 V11.4" fill="none" stroke="#1a3a6a" stroke-width="1.5"/></svg>
<div class="t" style="left:71px;top:384.84px;font-size:12px;color:#000;font-family:'Liberation Sans', sans-serif;transform:scaleX(0.9153);">FreeRTOSConfig.h</div>
<svg style="left:39px;top:405px;" width="6" height="10" viewBox="0 0 6 10"><path d="M1 1 L5 5 L1 9" fill="none" stroke="#a0a0a0" stroke-width="1.4"/></svg>
<svg style="left:53px;top:402px;" width="12" height="15" viewBox="0 0 12 15"><path d="M0.5 0.5 H7.5 L10.5 3.5 V13.5 H0.5 Z" fill="#f2f6fd" stroke="#a8882e"/><path d="M7.5 0.5 V3.5 H10.5 Z" fill="#d9bc68" stroke="#a8882e" stroke-width="0.8"/><rect x="2" y="10" width="1.4" height="1.4" fill="#1a3a6a"/><rect x="4.3" y="3.6" width="1.5" height="7.8" fill="#1a3a6a"/><path d="M5.2 6.6 Q6.2 5.6 7.4 5.6 Q8.8 5.6 8.8 7.2 V11.4" fill="none" stroke="#1a3a6a" stroke-width="1.5"/></svg>
<div class="t" style="left:71px;top:402.84px;font-size:12px;color:#000;font-family:'Liberation Sans', sans-serif;transform:scaleX(0.9912);">gatt_db.h</div>
<svg style="left:39px;top:423px;" width="6" height="10" viewBox="0 0 6 10"><path d="M1 1 L5 5 L1 9" fill="none" stroke="#a0a0a0" stroke-width="1.4"/></svg>
<svg style="left:53px;top:420px;" width="12" height="15" viewBox="0 0 12 15"><path d="M0.5 0.5 H7.5 L10.5 3.5 V13.5 H0.5 Z" fill="#f2f6fd" stroke="#a8882e"/><path d="M7.5 0.5 V3.5 H10.5 Z" fill="#d9bc68" stroke="#a8882e" stroke-width="0.8"/><rect x="2" y="10" width="1.4" height="1.4" fill="#1a3a6a"/><rect x="4.3" y="3.6" width="1.5" height="7.8" fill="#1a3a6a"/><path d="M5.2 6.6 Q6.2 5.6 7.4 5.6 Q8.8 5.6 8.8 7.2 V11.4" fill="none" stroke="#1a3a6a" stroke-width="1.5"/></svg>
<div class="t" style="left:71px;top:420.84px;font-size:12px;color:#000;font-family:'Liberation Sans', sans-serif;transform:scaleX(0.9799);">gatt_uuid128.h</div>
<svg style="left:39px;top:441px;" width="6" height="10" viewBox="0 0 6 10"><path d="M1 1 L5 5 L1 9" fill="none" stroke="#a0a0a0" stroke-width="1.4"/></svg>
<svg style="left:53px;top:438px;" width="12" height="15" viewBox="0 0 12 15"><path d="M0.5 0.5 H7.5 L10.5 3.5 V13.5 H0.5 Z" fill="#f2f6fd" stroke="#a8882e"/><path d="M7.5 0.5 V3.5 H10.5 Z" fill="#d9bc68" stroke="#a8882e" stroke-width="0.8"/><rect x="2" y="10" width="1.4" height="1.4" fill="#1a4f90"/><path d="M9.2 6.2 Q8.4 5 6.9 5 Q4.9 5 4.9 8 Q4.9 11 6.9 11 Q8.4 11 9.2 9.8" fill="none" stroke="#1a4f90" stroke-width="1.6"/></svg>
<div class="t" style="left:71px;top:438.84px;font-size:12px;color:#000;font-family:'Liberation Sans', sans-serif;transform:scaleX(0.9795);">hardware_init.c</div>
<div style="left:48px;top:454px;width:61px;height:18px;background:#d9d9d9;"></div>
<svg style="left:39px;top:459px;" width="6" height="10" viewBox="0 0 6 10"><path d="M1 1 L5 5 L1 9" fill="none" stroke="#a0a0a0" stroke-width="1.4"/></svg>
<svg style="left:53px;top:456px;" width="12" height="15" viewBox="0 0 12 15"><path d="M0.5 0.5 H7.5 L10.5 3.5 V13.5 H0.5 Z" fill="#f2f6fd" stroke="#a8882e"/><path d="M7.5 0.5 V3.5 H10.5 Z" fill="#d9bc68" stroke="#a8882e" stroke-width="0.8"/><rect x="2" y="10" width="1.4" height="1.4" fill="#1a4f90"/><path d="M9.2 6.2 Q8.4 5 6.9 5 Q4.9 5 4.9 8 Q4.9 11 6.9 11 Q8.4 11 9.2 9.8" fill="none" stroke="#1a4f90" stroke-width="1.6"/></svg>
<div class="t" style="left:71px;top:456.84px;font-size:12px;color:#000;font-family:'Liberation Sans', sans-serif;">main.c</div>
<svg style="left:39px;top:477px;" width="6" height="10" viewBox="0 0 6 10"><path d="M1 1 L5 5 L1 9" fill="none" stroke="#a0a0a0" stroke-width="1.4"/></svg>
<svg style="left:53px;top:474px;" width="12" height="15" viewBox="0 0 12 15"><path d="M0.5 0.5 H7.5 L10.5 3.5 V13.5 H0.5 Z" fill="#f2f6fd" stroke="#a8882e"/><path d="M7.5 0.5 V3.5 H10.5 Z" fill="#d9bc68" stroke="#a8882e" stroke-width="0.8"/><rect x="2" y="10" width="1.4" height="1.4" fill="#1a3a6a"/><rect x="4.3" y="3.6" width="1.5" height="7.8" fill="#1a3a6a"/><path d="M5.2 6.6 Q6.2 5.6 7.4 5.6 Q8.8 5.6 8.8 7.2 V11.4" fill="none" stroke="#1a3a6a" stroke-width="1.5"/></svg>
<div class="t" style="left:71px;top:474.84px;font-size:12px;color:#000;font-family:'Liberation Sans', sans-serif;transform:scaleX(0.9892);">pin_mux_lp.h</div>
<svg style="left:39px;top:495px;" width="6" height="10" viewBox="0 0 6 10"><path d="M1 1 L5 5 L1 9" fill="none" stroke="#a0a0a0" stroke-width="1.4"/></svg>
<svg style="left:53px;top:492px;" width="12" height="15" viewBox="0 0 12 15"><path d="M0.5 0.5 H7.5 L10.5 3.5 V13.5 H0.5 Z" fill="#f2f6fd" stroke="#a8882e"/><path d="M7.5 0.5 V3.5 H10.5 Z" fill="#d9bc68" stroke="#a8882e" stroke-width="0.8"/><rect x="2" y="10" width="1.4" height="1.4" fill="#1a3a6a"/><rect x="4.3" y="3.6" width="1.5" height="7.8" fill="#1a3a6a"/><path d="M5.2 6.6 Q6.2 5.6 7.4 5.6 Q8.8 5.6 8.8 7.2 V11.4" fill="none" stroke="#1a3a6a" stroke-width="1.5"/></svg>
<div class="t" style="left:71px;top:492.84px;font-size:12px;color:#000;font-family:'Liberation Sans', sans-serif;transform:scaleX(0.9392);">RTE_Components.h</div>
<svg style="left:39px;top:513px;" width="6" height="10" viewBox="0 0 6 10"><path d="M1 1 L5 5 L1 9" fill="none" stroke="#a0a0a0" stroke-width="1.4"/></svg>
<svg style="left:53px;top:510px;" width="12" height="15" viewBox="0 0 12 15"><path d="M0.5 0.5 H7.5 L10.5 3.5 V13.5 H0.5 Z" fill="#f2f6fd" stroke="#a8882e"/><path d="M7.5 0.5 V3.5 H10.5 Z" fill="#d9bc68" stroke="#a8882e" stroke-width="0.8"/><rect x="2" y="10" width="1.4" height="1.4" fill="#1a4f90"/><path d="M9.2 6.2 Q8.4 5 6.9 5 Q4.9 5 4.9 8 Q4.9 11 6.9 11 Q8.4 11 9.2 9.8" fill="none" stroke="#1a4f90" stroke-width="1.6"/></svg>
<div class="t" style="left:71px;top:510.84px;font-size:12px;color:#000;font-family:'Liberation Sans', sans-serif;transform:scaleX(0.9935);">semihost_hardfault.c</div>
<svg style="left:39px;top:531px;" width="6" height="10" viewBox="0 0 6 10"><path d="M1 1 L5 5 L1 9" fill="none" stroke="#a0a0a0" stroke-width="1.4"/></svg>
<svg style="left:53px;top:528px;" width="12" height="15" viewBox="0 0 12 15"><path d="M0.5 0.5 H7.5 L10.5 3.5 V13.5 H0.5 Z" fill="#f2f6fd" stroke="#a8882e"/><path d="M7.5 0.5 V3.5 H10.5 Z" fill="#d9bc68" stroke="#a8882e" stroke-width="0.8"/><rect x="2" y="10" width="1.4" height="1.4" fill="#1a4f90"/><path d="M9.2 6.2 Q8.4 5 6.9 5 Q4.9 5 4.9 8 Q4.9 11 6.9 11 Q8.4 11 9.2 9.8" fill="none" stroke="#1a4f90" stroke-width="1.6"/></svg>
<div class="t" style="left:71px;top:528.84px;font-size:12px;color:#000;font-family:'Liberation Sans', sans-serif;transform:scaleX(0.9447);">wireless_uart.c</div>
<svg style="left:39px;top:549px;" width="6" height="10" viewBox="0 0 6 10"><path d="M1 1 L5 5 L1 9" fill="none" stroke="#a0a0a0" stroke-width="1.4"/></svg>
<svg style="left:53px;top:546px;" width="12" height="15" viewBox="0 0 12 15"><path d="M0.5 0.5 H7.5 L10.5 3.5 V13.5 H0.5 Z" fill="#f2f6fd" stroke="#a8882e"/><path d="M7.5 0.5 V3.5 H10.5 Z" fill="#d9bc68" stroke="#a8882e" stroke-width="0.8"/><rect x="2" y="10" width="1.4" height="1.4" fill="#1a3a6a"/><rect x="4.3" y="3.6" width="1.5" height="7.8" fill="#1a3a6a"/><path d="M5.2 6.6 Q6.2 5.6 7.4 5.6 Q8.8 5.6 8.8 7.2 V11.4" fill="none" stroke="#1a3a6a" stroke-width="1.5"/></svg>
<div class="t" style="left:71px;top:546.84px;font-size:12px;color:#000;font-family:'Liberation Sans', sans-serif;transform:scaleX(0.9505);">wireless_uart.h</div>
<svg style="left:52px;top:564px;" width="12" height="15" viewBox="0 0 12 15"><path d="M0.5 0.5 H7.5 L10.5 3.5 V13.5 H0.5 Z" fill="#f2f6fd" stroke="#a8882e"/><path d="M7.5 0.5 V3.5 H10.5 Z" fill="#d9bc68" stroke="#a8882e" stroke-width="0.8"/><text x="5.5" y="10" font-size="7.5" font-family="Liberation Serif" font-weight="bold" fill="#3a5a8a" text-anchor="middle">W</text></svg>
<div class="t" style="left:71px;top:564.84px;font-size:12px;color:#000;font-family:'Liberation Sans', sans-serif;transform:scaleX(1.0035);">readme.md</div>
<svg style="left:21px;top:586px;" width="10" height="6" viewBox="0 0 10 6"><path d="M1 1 L5 5 L9 1" fill="none" stroke="#404040" stroke-width="1.5"/></svg>
<svg style="left:35px;top:583px;" width="16" height="13" viewBox="0 0 16 13"><path d="M0.5 3.5 Q0.5 2 2 2 H4.5 Q5.5 2 6 3.5 H11.5 V11.5 H0.5 Z" fill="#f6dc98" stroke="#c07a28"/><path d="M0.5 11.5 L3.5 6.5 H15 L12 11.5 Z" fill="#f8d890" stroke="#c07a28"/><rect x="8" y="0" width="6" height="6" rx="1.2" fill="#7a9ae0" stroke="#5a7ac0" stroke-width="0.8"/><path d="M12.3 1.8 A1.6 1.6 0 1 0 12.3 4.2" fill="none" stroke="#fff" stroke-width="1"/></svg>
<div class="t" style="left:55px;top:582.84px;font-size:12px;color:#000;font-family:'Liberation Sans', sans-serif;">startup</div>
<svg style="left:39px;top:603px;" width="6" height="10" viewBox="0 0 6 10"><path d="M1 1 L5 5 L1 9" fill="none" stroke="#a0a0a0" stroke-width="1.4"/></svg>
<svg style="left:53px;top:600px;" width="12" height="15" viewBox="0 0 12 15"><path d="M0.5 0.5 H7.5 L10.5 3.5 V13.5 H0.5 Z" fill="#f2f6fd" stroke="#a8882e"/><path d="M7.5 0.5 V3.5 H10.5 Z" fill="#d9bc68" stroke="#a8882e" stroke-width="0.8"/><rect x="2" y="10" width="1.4" height="1.4" fill="#1a4f90"/><path d="M9.2 6.2 Q8.4 5 6.9 5 Q4.9 5 4.9 8 Q4.9 11 6.9 11 Q8.4 11 9.2 9.8" fill="none" stroke="#1a4f90" stroke-width="1.6"/></svg>
<div class="t" style="left:71px;top:600.84px;font-size:12px;color:#000;font-family:'Liberation Sans', sans-serif;transform:scaleX(0.9441);">startup_kw47b42zb7_cm33_core0.c</div>
<svg style="left:23px;top:621px;" width="6" height="10" viewBox="0 0 6 10"><path d="M1 1 L5 5 L1 9" fill="none" stroke="#a0a0a0" stroke-width="1.4"/></svg>
<svg style="left:35px;top:619px;" width="16" height="13" viewBox="0 0 16 13"><path d="M0.5 3.5 Q0.5 2 2 2 H4.5 Q5.5 2 6 3.5 H11.5 V11.5 H0.5 Z" fill="#f6dc98" stroke="#c07a28"/><path d="M0.5 11.5 L3.5 6.5 H15 L12 11.5 Z" fill="#f8d890" stroke="#c07a28"/><rect x="8" y="0" width="6" height="6" rx="1.2" fill="#7a9ae0" stroke="#5a7ac0" stroke-width="0.8"/><path d="M12.3 1.8 A1.6 1.6 0 1 0 12.3 4.2" fill="none" stroke="#fff" stroke-width="1"/></svg>
<div class="t" style="left:55px;top:618.84px;font-size:12px;color:#000;font-family:'Liberation Sans', sans-serif;transform:scaleX(1.0306);">utilities</div>
<div style="left:386px;top:148px;width:16px;height:485px;background:#f0f0f0;"></div>
<div style="left:387px;top:408px;width:14px;height:180px;background:#cdcdcd;"></div>
<svg style="left:389px;top:155px;" width="10" height="6" viewBox="0 0 10 6"><path d="M1 5.5 L5 1.5 L9 5.5" fill="none" stroke="#606060" stroke-width="1.8"/></svg>
<svg style="left:389px;top:622px;" width="10" height="6" viewBox="0 0 10 6"><path d="M1 0.5 L5 4.5 L9 0.5" fill="none" stroke="#606060" stroke-width="1.8"/></svg>
<div style="left:407px;top:100px;width:809px;height:145px;background:#d9d9d9;"></div>
<div style="left:408px;top:101px;width:807px;height:143px;background:#ffffff;"></div>
<div style="left:408px;top:101px;width:807px;height:25px;background:#e5e5e5;"></div>
<div style="left:408px;top:101px;width:85px;height:25px;background:#f2f2f2;"></div>
<div style="left:493px;top:101px;width:1px;height:25px;background:#d6d6d6;"></div>
<div style="left:493px;top:125px;width:722px;height:1px;background:#d6d6d6;"></div>
<svg style="left:413px;top:107px;" width="15" height="15" viewBox="0 0 15 15"><g stroke="#3a7a5a" stroke-width="1.2" stroke-linecap="round" fill="none"><path d="M4.5 3 V0.6 M8.5 3.2 L9.6 1.2 M3 4.8 H0.6 M3.5 7 L1.3 8.3 M10.8 4.6 L13.6 5.5 M12 8.6 L14.2 10.4 M5.2 10.2 L6 14 M9.2 11.6 L10.6 14.2"/></g><ellipse cx="8.2" cy="8" rx="3.9" ry="5.2" transform="rotate(-45 8.2 8)" fill="#b8dca8" stroke="#2a8a8a" stroke-width="1.1"/><path d="M7 6.5 L10 9.5" stroke="#ffffff" stroke-opacity="0.45" stroke-width="1"/><circle cx="4.6" cy="4.6" r="1.9" fill="#a0d890" stroke="#2a8a8a" stroke-width="1"/></svg>
<div class="t" style="left:432px;top:108.84px;font-size:12px;color:#000;font-family:'Liberation Sans', sans-serif;transform:scaleX(0.9616);">Debug</div>
<svg style="left:475px;top:110px;" width="10" height="10" viewBox="0 0 10 10"><path d="M0.5 0.5 L9.5 9.5 M9.5 0.5 L0.5 9.5" stroke="#1a1a1a" stroke-width="1.1"/></svg>
<svg style="left:1071px;top:106px;" width="14" height="14" viewBox="0 0 14 14"><rect x="0.5" y="0.5" width="10" height="9" fill="#dfeaf8" stroke="#8aaad8"/><rect x="3.5" y="3.5" width="10" height="10" fill="#eef4fc" stroke="#4a7ac0"/><rect x="5.5" y="8" width="6" height="1.5" fill="#2a5aa0"/></svg>
<svg style="left:1091px;top:105px;" width="17" height="17" viewBox="0 0 17 17"><path d="M1.5 1.5 L9.5 9.5 M9.5 1.5 L1.5 9.5" stroke="#c8c8c8" stroke-width="2.6"/><path d="M1.5 1.5 L9.5 9.5 M9.5 1.5 L1.5 9.5" stroke="#f4f4f4" stroke-width="1.2"/><path d="M5.5 5.5 L14.5 14.5 M14.5 5.5 L5.5 14.5" stroke="#b0b0b0" stroke-width="3.2"/></svg>
<div style="left:1114px;top:104px;width:1px;height:17px;background:#9a9a9a;"></div>
<svg style="left:1122px;top:106px;" width="18" height="14" viewBox="0 0 18 14"><text x="1" y="13" font-family="Liberation Serif" font-weight="bold" font-size="15" fill="#1a1a9a">i</text><path d="M7 6 H11 V3.5 L15.5 7.5 L11 11.5 V9 H7 Z" fill="#f0d040" stroke="#908010" stroke-width="0.8"/></svg>
<svg style="left:1152px;top:105px;" width="6" height="15" viewBox="0 0 6 15"><circle cx="3" cy="2.5" r="2" fill="none" stroke="#666" stroke-width="1"/><circle cx="3" cy="7.0" r="2" fill="none" stroke="#666" stroke-width="1"/><circle cx="3" cy="11.5" r="2" fill="none" stroke="#666" stroke-width="1"/></svg>
<svg style="left:1172px;top:108px;" width="11" height="5" viewBox="0 0 11 5"><rect x="0.5" y="0.5" width="9" height="3" fill="none" stroke="#000" stroke-width="1.15"/></svg>
<svg style="left:1195px;top:108px;" width="11" height="11" viewBox="0 0 11 11"><rect x="0.5" y="0.5" width="9" height="9" fill="none" stroke="#000" stroke-width="1.15"/><path d="M0.5 2.5 H9.5" stroke="#000" stroke-width="1.15"/></svg>
<svg style="left:414px;top:132px;" width="10" height="6" viewBox="0 0 10 6"><path d="M1 1 L5 5 L9 1" fill="none" stroke="#404040" stroke-width="1.5"/></svg>
<svg style="left:427px;top:127px;" width="16" height="16" viewBox="0 0 16 16"><rect width="16" height="16" fill="#0000f0"/><path d="M5.2 1.8 H10.2 V6.2 Q10.2 8.6 7.6 8.6 Q5.2 8.6 5.2 6.6" fill="none" stroke="#fff" stroke-width="2"/><text x="8" y="15" font-size="6.6" font-family="Liberation Sans" font-weight="bold" fill="#fff" text-anchor="middle" textLength="13" lengthAdjust="spacingAndGlyphs">Link</text></svg>
<div class="t" style="left:448px;top:128.84px;font-size:12px;color:#000;font-family:'Liberation Sans', sans-serif;transform:scaleX(0.9424);">kw47evk_wireless_uart_freertos JLink Debug [GDB SEGGER Interface Debugging]</div>
<svg style="left:430px;top:150px;" width="10" height="6" viewBox="0 0 10 6"><path d="M1 1 L5 5 L9 1" fill="none" stroke="#404040" stroke-width="1.5"/></svg>
<svg style="left:444px;top:144px;" width="16" height="16" viewBox="0 0 16 16"><rect x="0.5" y="8.5" width="8" height="6" fill="#e8c860" stroke="#a88020"/><path d="M3 9 V14 M6 9 V14" stroke="#fff8d0"/><circle cx="11.5" cy="5" r="3.6" fill="#f0b830" stroke="#c08010"/><circle cx="11.5" cy="5" r="1.3" fill="#fff0c0"/><path d="M1 5 Q3 1 7 2" fill="none" stroke="#2a6ab0" stroke-width="1.2"/><path d="M9 14 Q13 14 14 11" fill="none" stroke="#2a6ab0" stroke-width="1.2"/></svg>
<div class="t" style="left:464px;top:146.84px;font-size:12px;color:#000;font-family:'Liberation Sans', sans-serif;transform:scaleX(0.9437);">kw47evk_wireless_uart_freertos.axf</div>
<svg style="left:446px;top:168px;" width="10" height="6" viewBox="0 0 10 6"><path d="M1 1 L5 5 L9 1" fill="none" stroke="#404040" stroke-width="1.5"/></svg>
<svg style="left:460px;top:162px;" width="16" height="16" viewBox="0 0 16 16"><rect x="0.5" y="8.5" width="8" height="6" fill="#e8c860" stroke="#a88020"/><path d="M3 9 V14 M6 9 V14" stroke="#fff8d0"/><circle cx="10.5" cy="6" r="3.8" fill="#f0b830" stroke="#a07010"/><circle cx="10.5" cy="6" r="1.4" fill="#fff0c0"/></svg>
<div class="t" style="left:481px;top:164.84px;font-size:12px;color:#000;font-family:'Liberation Sans', sans-serif;transform:scaleX(0.9445);">Thread #1 57005 (Suspended : Breakpoint)</div>
<div style="left:473px;top:180px;width:168px;height:17px;background:#d9d9d9;"></div>
<svg style="left:477px;top:183px;" width="12" height="11" viewBox="0 0 12 11"><rect x="0" y="0" width="12" height="2.2" fill="#2a5aa8"/><rect x="0" y="4.4" width="12" height="2.2" fill="#2a5aa8"/><rect x="0" y="8.8" width="12" height="2.2" fill="#2a5aa8"/></svg>
<div class="t" style="left:496px;top:182.84px;font-size:12px;color:#000;font-family:'Liberation Sans', sans-serif;transform:scaleX(0.9674);">main() at main.c:78 0x182c</div>
<svg style="left:444px;top:198px;" width="16" height="16" viewBox="0 0 16 16"><rect x="6.5" y="0.5" width="8" height="14" fill="#e0e0e0" stroke="#909090"/><path d="M8 3 H13 M8 5 H13" stroke="#909090"/><path d="M1 9 L6 12 L1 15 Z" fill="#3aa040"/></svg>
<div class="t" style="left:464px;top:200.84px;font-size:12px;color:#000;font-family:'Liberation Sans', sans-serif;transform:scaleX(0.9661);">arm-none-eabi-gdb (13.2.90.20231008)</div>
<div style="left:407px;top:249px;width:809px;height:384px;background:#d9d9d9;"></div>
<div style="left:408px;top:250px;width:807px;height:382px;background:#ffffff;"></div>
<div style="left:408px;top:250px;width:807px;height:25px;background:#e5e5e5;"></div>
<svg style="left:415px;top:256px;" width="12" height="15" viewBox="0 0 12 15"><path d="M0.5 0.5 H7.5 L10.5 3.5 V13.5 H0.5 Z" fill="#f2f6fd" stroke="#a8882e"/><path d="M7.5 0.5 V3.5 H10.5 Z" fill="#d9bc68" stroke="#a8882e" stroke-width="0.8"/><rect x="2" y="10" width="1.4" height="1.4" fill="#1a4f90"/><path d="M9.2 6.2 Q8.4 5 6.9 5 Q4.9 5 4.9 8 Q4.9 11 6.9 11 Q8.4 11 9.2 9.8" fill="none" stroke="#1a4f90" stroke-width="1.6"/></svg>
<div class="t" style="left:431px;top:256.84px;font-size:12px;color:#000;font-family:'Liberation Sans', sans-serif;transform:scaleX(0.9497);">wireless_uart.c</div>
<svg style="left:540px;top:256px;" width="12" height="15" viewBox="0 0 12 15"><path d="M0.5 0.5 H7.5 L10.5 3.5 V13.5 H0.5 Z" fill="#f2f6fd" stroke="#a8882e"/><path d="M7.5 0.5 V3.5 H10.5 Z" fill="#d9bc68" stroke="#a8882e" stroke-width="0.8"/><rect x="2" y="10" width="1.4" height="1.4" fill="#1a4f90"/><path d="M9.2 6.2 Q8.4 5 6.9 5 Q4.9 5 4.9 8 Q4.9 11 6.9 11 Q8.4 11 9.2 9.8" fill="none" stroke="#1a4f90" stroke-width="1.6"/></svg>
<div class="t" style="left:556px;top:256.84px;font-size:12px;color:#000;font-family:'Liberation Sans', sans-serif;transform:scaleX(0.9493);">startup_kw47b42zb7_cm33_core0.c</div>
<div style="left:764px;top:250px;width:86px;height:25px;background:#f2f2f2;"></div>
<svg style="left:772px;top:256px;" width="12" height="15" viewBox="0 0 12 15"><path d="M0.5 0.5 H7.5 L10.5 3.5 V13.5 H0.5 Z" fill="#f2f6fd" stroke="#a8882e"/><path d="M7.5 0.5 V3.5 H10.5 Z" fill="#d9bc68" stroke="#a8882e" stroke-width="0.8"/><rect x="2" y="10" width="1.4" height="1.4" fill="#1a4f90"/><path d="M9.2 6.2 Q8.4 5 6.9 5 Q4.9 5 4.9 8 Q4.9 11 6.9 11 Q8.4 11 9.2 9.8" fill="none" stroke="#1a4f90" stroke-width="1.6"/></svg>
<div class="t" style="left:788px;top:256.84px;font-size:12px;color:#000;font-family:'Liberation Sans', sans-serif;transform:scaleX(1.0186);">main.c</div>
<svg style="left:833px;top:259px;" width="10" height="10" viewBox="0 0 10 10"><path d="M0.5 0.5 L9.5 9.5 M9.5 0.5 L0.5 9.5" stroke="#1a1a1a" stroke-width="1.1"/></svg>
<svg style="left:1172px;top:257px;" width="11" height="5" viewBox="0 0 11 5"><rect x="0.5" y="0.5" width="9" height="3" fill="none" stroke="#000" stroke-width="1.15"/></svg>
<svg style="left:1195px;top:257px;" width="11" height="11" viewBox="0 0 11 11"><rect x="0.5" y="0.5" width="9" height="9" fill="none" stroke="#000" stroke-width="1.15"/><path d="M0.5 2.5 H9.5" stroke="#000" stroke-width="1.15"/></svg>
<div style="left:408px;top:275px;width:12px;height:341px;background:#f8f8f8;"></div>
<div style="left:408px;top:300px;width:12px;height:240px;background:#3f7fd0;background-image:repeating-conic-gradient(#0a64d0 0 25%, #ffffff 0 50%);background-size:2px 2px;"></div>
<div style="left:408px;top:300px;width:12px;height:1px;background:#0a64d0;"></div>
<svg style="left:408px;top:318px;" width="8" height="10" viewBox="0 0 8 10"><path d="M0 2.5 H2.8 V0.3 L7 4.7 L2.8 9.2 V7 H0 Z" fill="#7aa0cc" stroke="#1a4a88" stroke-width="1"/></svg>
<div style="left:446px;top:315px;width:739px;height:15px;background:#e8f2fe;"></div>
<div style="left:446px;top:315px;width:7px;height:15px;background:#c9dfc0;"></div>
<div class="t" style="left:420px;top:272.81px;font-size:12px;color:#787878;font-family:'Liberation Mono', monospace;transform:scaleX(0.9720);">75</div>
<div class="t" style="left:446px;top:272.81px;font-size:12px;color:#3f7f5f;font-family:'Liberation Mono', monospace;transform:scaleX(0.9720);">*************************************************************************************</div>
<div class="t" style="left:420px;top:287.81px;font-size:12px;color:#787878;font-family:'Liberation Mono', monospace;transform:scaleX(0.9720);">76</div>
<div class="t" style="left:446px;top:287.81px;font-size:12px;color:#3f7f5f;font-family:'Liberation Mono', monospace;transform:scaleX(0.9720);">************************************************************************************/</div>
<div class="t" style="left:420px;top:302.81px;font-size:12px;color:#787878;font-family:'Liberation Mono', monospace;transform:scaleX(0.9720);">77</div>
<div class="t" style="left:446px;top:302.81px;font-size:12px;color:#7f0055;font-family:'Liberation Mono', monospace;font-weight:bold;transform:scaleX(0.9720);">int</div>
<div class="t" style="left:467.0px;top:302.81px;font-size:12px;color:#000000;font-family:'Liberation Mono', monospace;transform:scaleX(0.9720);"> main(</div>
<div class="t" style="left:509.0px;top:302.81px;font-size:12px;color:#7f0055;font-family:'Liberation Mono', monospace;font-weight:bold;transform:scaleX(0.9720);">void</div>
<div class="t" style="left:537.0px;top:302.81px;font-size:12px;color:#000000;font-family:'Liberation Mono', monospace;transform:scaleX(0.9720);">)</div>
<div class="t" style="left:420px;top:317.81px;font-size:12px;color:#787878;font-family:'Liberation Mono', monospace;transform:scaleX(0.9720);">78</div>
<div class="t" style="left:446px;top:317.81px;font-size:12px;color:#000000;font-family:'Liberation Mono', monospace;transform:scaleX(0.9720);">{</div>
<div class="t" style="left:420px;top:332.81px;font-size:12px;color:#787878;font-family:'Liberation Mono', monospace;transform:scaleX(0.9720);">79</div>
<div class="t" style="left:446px;top:332.81px;font-size:12px;color:#000000;font-family:'Liberation Mono', monospace;transform:scaleX(0.9720);">    </div>
<div class="t" style="left:474.0px;top:332.81px;font-size:12px;color:#3f7f5f;font-family:'Liberation Mono', monospace;transform:scaleX(0.9720);">/* Init OSA: should be called before any other OSA API */</div>
<div class="t" style="left:420px;top:347.81px;font-size:12px;color:#787878;font-family:'Liberation Mono', monospace;transform:scaleX(0.9720);">80</div>
<div class="t" style="left:446px;top:347.81px;font-size:12px;color:#000000;font-family:'Liberation Mono', monospace;transform:scaleX(0.9720);">    OSA_Init();</div>
<div class="t" style="left:420px;top:362.81px;font-size:12px;color:#787878;font-family:'Liberation Mono', monospace;transform:scaleX(0.9720);">81</div>
<div class="t" style="left:420px;top:377.81px;font-size:12px;color:#787878;font-family:'Liberation Mono', monospace;transform:scaleX(0.9720);">82</div>
<div class="t" style="left:446px;top:377.81px;font-size:12px;color:#000000;font-family:'Liberation Mono', monospace;transform:scaleX(0.9720);">    BOARD_InitHardware();</div>
<div class="t" style="left:420px;top:392.81px;font-size:12px;color:#787878;font-family:'Liberation Mono', monospace;transform:scaleX(0.9720);">83</div>
<div class="t" style="left:420px;top:407.81px;font-size:12px;color:#787878;font-family:'Liberation Mono', monospace;transform:scaleX(0.9720);">84</div>
<div class="t" style="left:446px;top:407.81px;font-size:12px;color:#000000;font-family:'Liberation Mono', monospace;transform:scaleX(0.9720);">    (</div>
<div class="t" style="left:481.0px;top:407.81px;font-size:12px;color:#7f0055;font-family:'Liberation Mono', monospace;font-weight:bold;transform:scaleX(0.9720);">void</div>
<div class="t" style="left:509.0px;top:407.81px;font-size:12px;color:#000000;font-family:'Liberation Mono', monospace;transform:scaleX(0.9720);">)OSA_TaskCreate((</div>
<div class="t" style="left:628.0px;top:407.81px;font-size:12px;color:#005032;font-family:'Liberation Mono', monospace;transform:scaleX(0.9720);">osa_task_handle_t</div>
<div class="t" style="left:747.0px;top:407.81px;font-size:12px;color:#000000;font-family:'Liberation Mono', monospace;transform:scaleX(0.9720);">)s_startTaskHandle, OSA_TASK(start_task), NULL);</div>
<div class="t" style="left:420px;top:422.81px;font-size:12px;color:#787878;font-family:'Liberation Mono', monospace;transform:scaleX(0.9720);">85</div>
<div class="t" style="left:420px;top:437.81px;font-size:12px;color:#787878;font-family:'Liberation Mono', monospace;transform:scaleX(0.9720);">86</div>
<div class="t" style="left:446px;top:437.81px;font-size:12px;color:#000000;font-family:'Liberation Mono', monospace;transform:scaleX(0.9720);">    </div>
<div class="t" style="left:474.0px;top:437.81px;font-size:12px;color:#3f7f5f;font-family:'Liberation Mono', monospace;transform:scaleX(0.9720);">/* Start scheduler*/</div>
<div class="t" style="left:420px;top:452.81px;font-size:12px;color:#787878;font-family:'Liberation Mono', monospace;transform:scaleX(0.9720);">87</div>
<div class="t" style="left:446px;top:452.81px;font-size:12px;color:#000000;font-family:'Liberation Mono', monospace;transform:scaleX(0.9720);">    OSA_Start();</div>
<div class="t" style="left:420px;top:467.81px;font-size:12px;color:#787878;font-family:'Liberation Mono', monospace;transform:scaleX(0.9720);">88</div>
<div class="t" style="left:420px;top:482.81px;font-size:12px;color:#787878;font-family:'Liberation Mono', monospace;transform:scaleX(0.9720);">89</div>
<div class="t" style="left:446px;top:482.81px;font-size:12px;color:#000000;font-family:'Liberation Mono', monospace;transform:scaleX(0.9720);">    </div>
<div class="t" style="left:474.0px;top:482.81px;font-size:12px;color:#3f7f5f;font-family:'Liberation Mono', monospace;transform:scaleX(0.9720);">/*won&#x27;t run here*/</div>
<div class="t" style="left:420px;top:497.81px;font-size:12px;color:#787878;font-family:'Liberation Mono', monospace;transform:scaleX(0.9720);">90</div>
<div class="t" style="left:446px;top:497.81px;font-size:12px;color:#000000;font-family:'Liberation Mono', monospace;transform:scaleX(0.9720);">    assert(0);</div>
<div class="t" style="left:420px;top:512.81px;font-size:12px;color:#787878;font-family:'Liberation Mono', monospace;transform:scaleX(0.9720);">91</div>
<div class="t" style="left:446px;top:512.81px;font-size:12px;color:#000000;font-family:'Liberation Mono', monospace;transform:scaleX(0.9720);">    </div>
<div class="t" style="left:474.0px;top:512.81px;font-size:12px;color:#7f0055;font-family:'Liberation Mono', monospace;font-weight:bold;transform:scaleX(0.9720);">return</div>
<div class="t" style="left:516.0px;top:512.81px;font-size:12px;color:#000000;font-family:'Liberation Mono', monospace;transform:scaleX(0.9720);"> 0;</div>
<div class="t" style="left:420px;top:527.81px;font-size:12px;color:#787878;font-family:'Liberation Mono', monospace;transform:scaleX(0.9720);">92</div>
<div class="t" style="left:446px;top:527.81px;font-size:12px;color:#000000;font-family:'Liberation Mono', monospace;transform:scaleX(0.9720);">}</div>
<div class="t" style="left:420px;top:542.81px;font-size:12px;color:#787878;font-family:'Liberation Mono', monospace;transform:scaleX(0.9720);">93</div>
<div class="t" style="left:420px;top:557.81px;font-size:12px;color:#787878;font-family:'Liberation Mono', monospace;transform:scaleX(0.9720);">94</div>
<div class="t" style="left:446px;top:557.81px;font-size:12px;color:#3f7f5f;font-family:'Liberation Mono', monospace;transform:scaleX(0.9720);">/*! *********************************************************************************</div>
<div class="t" style="left:420px;top:572.81px;font-size:12px;color:#787878;font-family:'Liberation Mono', monospace;transform:scaleX(0.9720);">95</div>
<div class="t" style="left:446px;top:572.81px;font-size:12px;color:#3f7f5f;font-family:'Liberation Mono', monospace;transform:scaleX(0.9720);"> * @}</div>
<div class="t" style="left:420px;top:587.81px;font-size:12px;color:#787878;font-family:'Liberation Mono', monospace;transform:scaleX(0.9720);">96</div>
<div class="t" style="left:446px;top:587.81px;font-size:12px;color:#3f7f5f;font-family:'Liberation Mono', monospace;transform:scaleX(0.9720);"> ********************************************************************************** */</div>
<div class="t" style="left:420px;top:602.81px;font-size:12px;color:#787878;font-family:'Liberation Mono', monospace;transform:scaleX(0.9720);">97</div>
<svg style="left:434px;top:303px;" width="10" height="10" viewBox="0 0 10 10"><circle cx="4.6" cy="4.5" r="4" fill="#fff" stroke="#a0aab8"/><path d="M2.3 4.5 H6.9" stroke="#4a5a70" stroke-width="1.1"/></svg>
<svg style="left:434px;top:558px;" width="10" height="10" viewBox="0 0 10 10"><circle cx="4.6" cy="4.5" r="4" fill="#fff" stroke="#a0aab8"/><path d="M2.3 4.5 H6.9" stroke="#4a5a70" stroke-width="1.1"/></svg>
<svg style="left:495px;top:342px;" width="29" height="3" viewBox="0 0 29 3"><path d="M0 2.5 L2 0.5 L4 2.5" fill="none" stroke="#e04040" stroke-width="0.8"/><path d="M4 2.5 L6 0.5 L8 2.5" fill="none" stroke="#e04040" stroke-width="0.8"/><path d="M8 2.5 L10 0.5 L12 2.5" fill="none" stroke="#e04040" stroke-width="0.8"/><path d="M12 2.5 L14 0.5 L16 2.5" fill="none" stroke="#e04040" stroke-width="0.8"/><path d="M16 2.5 L18 0.5 L20 2.5" fill="none" stroke="#e04040" stroke-width="0.8"/><path d="M20 2.5 L22 0.5 L24 2.5" fill="none" stroke="#e04040" stroke-width="0.8"/><path d="M24 2.5 L26 0.5 L28 2.5" fill="none" stroke="#e04040" stroke-width="0.8"/></svg>
<div style="left:408px;top:250px;width:807px;height:25px;background:#e5e5e5;"></div>
<div style="left:764px;top:250px;width:86px;height:25px;background:#f2f2f2;"></div>
<div style="left:850px;top:250px;width:1px;height:25px;background:#d6d6d6;"></div>
<div style="left:764px;top:250px;width:1px;height:25px;background:#d6d6d6;"></div>
<div style="left:408px;top:274px;width:357px;height:1px;background:#d6d6d6;"></div>
<div style="left:850px;top:274px;width:365px;height:1px;background:#d6d6d6;"></div>
<svg style="left:415px;top:256px;" width="12" height="15" viewBox="0 0 12 15"><path d="M0.5 0.5 H7.5 L10.5 3.5 V13.5 H0.5 Z" fill="#f2f6fd" stroke="#a8882e"/><path d="M7.5 0.5 V3.5 H10.5 Z" fill="#d9bc68" stroke="#a8882e" stroke-width="0.8"/><rect x="2" y="10" width="1.4" height="1.4" fill="#1a4f90"/><path d="M9.2 6.2 Q8.4 5 6.9 5 Q4.9 5 4.9 8 Q4.9 11 6.9 11 Q8.4 11 9.2 9.8" fill="none" stroke="#1a4f90" stroke-width="1.6"/></svg>
<div class="t" style="left:431px;top:256.84px;font-size:12px;color:#000;font-family:'Liberation Sans', sans-serif;transform:scaleX(0.9497);">wireless_uart.c</div>
<svg style="left:540px;top:256px;" width="12" height="15" viewBox="0 0 12 15"><path d="M0.5 0.5 H7.5 L10.5 3.5 V13.5 H0.5 Z" fill="#f2f6fd" stroke="#a8882e"/><path d="M7.5 0.5 V3.5 H10.5 Z" fill="#d9bc68" stroke="#a8882e" stroke-width="0.8"/><rect x="2" y="10" width="1.4" height="1.4" fill="#1a4f90"/><path d="M9.2 6.2 Q8.4 5 6.9 5 Q4.9 5 4.9 8 Q4.9 11 6.9 11 Q8.4 11 9.2 9.8" fill="none" stroke="#1a4f90" stroke-width="1.6"/></svg>
<div class="t" style="left:556px;top:256.84px;font-size:12px;color:#000;font-family:'Liberation Sans', sans-serif;transform:scaleX(0.9493);">startup_kw47b42zb7_cm33_core0.c</div>
<svg style="left:772px;top:256px;" width="12" height="15" viewBox="0 0 12 15"><path d="M0.5 0.5 H7.5 L10.5 3.5 V13.5 H0.5 Z" fill="#f2f6fd" stroke="#a8882e"/><path d="M7.5 0.5 V3.5 H10.5 Z" fill="#d9bc68" stroke="#a8882e" stroke-width="0.8"/><rect x="2" y="10" width="1.4" height="1.4" fill="#1a4f90"/><path d="M9.2 6.2 Q8.4 5 6.9 5 Q4.9 5 4.9 8 Q4.9 11 6.9 11 Q8.4 11 9.2 9.8" fill="none" stroke="#1a4f90" stroke-width="1.6"/></svg>
<div class="t" style="left:788px;top:256.84px;font-size:12px;color:#000;font-family:'Liberation Sans', sans-serif;transform:scaleX(1.0186);">main.c</div>
<svg style="left:833px;top:259px;" width="10" height="10" viewBox="0 0 10 10"><path d="M0.5 0.5 L9.5 9.5 M9.5 0.5 L0.5 9.5" stroke="#1a1a1a" stroke-width="1.1"/></svg>
<svg style="left:1172px;top:257px;" width="11" height="5" viewBox="0 0 11 5"><rect x="0.5" y="0.5" width="9" height="3" fill="none" stroke="#000" stroke-width="1.15"/></svg>
<svg style="left:1195px;top:257px;" width="11" height="11" viewBox="0 0 11 11"><rect x="0.5" y="0.5" width="9" height="9" fill="none" stroke="#000" stroke-width="1.15"/><path d="M0.5 2.5 H9.5" stroke="#000" stroke-width="1.15"/></svg>
<div style="left:1186px;top:275px;width:16px;height:341px;background:#f0f0f0;"></div>
<div style="left:1187px;top:525px;width:14px;height:73px;background:#cdcdcd;"></div>
<svg style="left:1189px;top:281px;" width="10" height="6" viewBox="0 0 10 6"><path d="M1 5.5 L5 1.5 L9 5.5" fill="none" stroke="#606060" stroke-width="1.8"/></svg>
<svg style="left:1189px;top:603px;" width="10" height="6" viewBox="0 0 10 6"><path d="M1 0.5 L5 4.5 L9 0.5" fill="none" stroke="#606060" stroke-width="1.8"/></svg>
<div style="left:1202px;top:275px;width:13px;height:357px;background:#f8f8f8;"></div>
<div style="left:1204px;top:535px;width:9px;height:4px;background:none;box-shadow:inset 0 0 0 1px #9fd39f;"></div>
<div style="left:408px;top:616px;width:35px;height:16px;background:#f8f8f8;"></div>
<div style="left:443px;top:616px;width:759px;height:16px;background:#f0f0f0;"></div>
<svg style="left:450px;top:619px;" width="6" height="10" viewBox="0 0 6 10"><path d="M5.5 1 L1.5 5 L5.5 9" fill="none" stroke="#b0b0b0" stroke-width="1.8"/></svg>
<svg style="left:1175px;top:619px;" width="6" height="10" viewBox="0 0 6 10"><path d="M0.5 1 L4.5 5 L0.5 9" fill="none" stroke="#b0b0b0" stroke-width="1.8"/></svg>
<div style="left:1220px;top:100px;width:307px;height:533px;background:#d9d9d9;"></div>
<div style="left:1221px;top:101px;width:305px;height:531px;background:#ffffff;"></div>
<div style="left:1221px;top:101px;width:305px;height:25px;background:#e5e5e5;"></div>
<div style="left:1221px;top:101px;width:89px;height:25px;background:#f2f2f2;"></div>
<div style="left:1310px;top:101px;width:1px;height:25px;background:#d6d6d6;"></div>
<div style="left:1310px;top:125px;width:216px;height:1px;background:#d6d6d6;"></div>
<div style="left:1221px;top:126px;width:305px;height:22px;background:#f0f0f0;"></div>
<svg style="left:1226px;top:107px;" width="14" height="15" viewBox="0 0 14 15"><rect x="0.75" y="0.75" width="5" height="5" fill="#c8dcf8" stroke="#1a6ab0" stroke-width="1.5"/><rect x="0.75" y="9.75" width="5" height="5" fill="#c8dcf8" stroke="#1a6ab0" stroke-width="1.5"/><path d="M7 3.5 H13 M7 12.5 H13 M11 7.5 H13" stroke="#1a6ab0" stroke-width="1.1"/><rect x="7.3" y="6.3" width="2.4" height="2.4" fill="none" stroke="#1a6ab0" stroke-width="1"/></svg>
<div class="t" style="left:1244px;top:107.84px;font-size:12px;color:#000;font-family:'Liberation Sans', sans-serif;transform:scaleX(1.0258);">Outline</div>
<svg style="left:1293px;top:110px;" width="10" height="10" viewBox="0 0 10 10"><path d="M0.5 0.5 L9.5 9.5 M9.5 0.5 L0.5 9.5" stroke="#1a1a1a" stroke-width="1.1"/></svg>
<svg style="left:1314px;top:109px;" width="17" height="10" viewBox="0 0 17 10"><g fill="none" stroke="#3a8ad0" stroke-width="1.3"><path d="M2.8 0.3 Q0.2 4.5 2.8 8.7"/><path d="M3.8 2.4 L7.6 8.2 M7.6 2.4 L3.8 8.2"/><path d="M8.6 0.3 Q11.2 4.5 8.6 8.7"/></g><rect x="12" y="3.2" width="4.5" height="1.3" fill="#3a8ad0"/><rect x="12" y="5.8" width="4.5" height="1.3" fill="#3a8ad0"/></svg>
<div class="t" style="left:1334px;top:107.84px;font-size:12px;color:#000;font-family:'Liberation Sans', sans-serif;transform:scaleX(0.9371);">Global ...</div>
<svg style="left:1393px;top:109px;" width="17" height="11" viewBox="0 0 17 11"><rect x="0" y="0" width="4" height="2.2" fill="#2a2aa0"/><rect x="5" y="0" width="3" height="2.2" fill="#2a2aa0"/><rect x="9" y="0" width="2" height="2.2" fill="#2a2aa0"/><rect x="12" y="0" width="2" height="2.2" fill="#2a2aa0"/><rect x="15" y="0" width="1.5" height="2.2" fill="#2a2aa0"/><rect x="0" y="4" width="5" height="2.2" fill="#2a2aa0"/><rect x="6" y="4" width="4" height="2.2" fill="#2a2aa0"/><rect x="11" y="4" width="2" height="2.2" fill="#2a2aa0"/><rect x="14" y="4" width="1.5" height="2.2" fill="#2a2aa0"/><rect x="0" y="8" width="12" height="2" fill="#2a2aa0"/></svg>
<div class="t" style="left:1413px;top:107.84px;font-size:12px;color:#000;font-family:'Liberation Sans', sans-serif;transform:scaleX(0.8732);">Disasse...</div>
<svg style="left:1483px;top:108px;" width="11" height="5" viewBox="0 0 11 5"><rect x="0.5" y="0.5" width="9" height="3" fill="none" stroke="#000" stroke-width="1.15"/></svg>
<svg style="left:1506px;top:108px;" width="11" height="11" viewBox="0 0 11 11"><rect x="0.5" y="0.5" width="9" height="9" fill="none" stroke="#000" stroke-width="1.15"/><path d="M0.5 2.5 H9.5" stroke="#000" stroke-width="1.15"/></svg>
<svg style="left:1370px;top:130px;" width="14" height="14" viewBox="0 0 14 14"><rect x="0.5" y="0.5" width="10" height="9" fill="#dfeaf8" stroke="#8aaad8"/><rect x="3.5" y="3.5" width="10" height="10" fill="#eef4fc" stroke="#4a7ac0"/><rect x="5.5" y="8" width="6" height="1.5" fill="#2a5aa0"/></svg>
<svg style="left:1391px;top:129px;" width="17" height="17" viewBox="0 0 17 17"><path d="M3.5 2 V14.5 M1 12 L3.5 14.5 L6 12" fill="none" stroke="#505a68" stroke-width="1.1"/><text x="6.5" y="7.5" font-size="10" font-family="Liberation Serif" font-weight="bold" fill="#1a8a7a">a</text><text x="8" y="16" font-size="10" font-family="Liberation Serif" font-weight="bold" fill="#8a2a9a">z</text></svg>
<svg style="left:1415px;top:129px;" width="16" height="16" viewBox="0 0 16 16"><circle cx="8" cy="8" r="5" fill="#6aa0e0" stroke="#2a60b0"/><path d="M1 1 L15 15" stroke="#1a3a8a" stroke-width="1.5"/></svg>
<svg style="left:1437px;top:129px;" width="17" height="16" viewBox="0 0 17 16"><circle cx="6" cy="10" r="3.5" fill="#909090"/><path d="M1 5 L12 15" stroke="#1a3a8a" stroke-width="1.5"/><text x="10" y="7" font-size="7" font-family="Liberation Sans" fill="#c02040">S</text></svg>
<svg style="left:1463px;top:132px;" width="10" height="10" viewBox="0 0 10 10"><circle cx="5" cy="5" r="4" fill="#4caf50" stroke="#2e7d32" stroke-width="0.8"/></svg>
<svg style="left:1484px;top:130px;" width="15" height="15" viewBox="0 0 15 15"><path d="M4 1 V14 M9 1 V14 M1 4.5 H13 M1 9.5 H13" stroke="#1a1a1a" stroke-width="2"/><path d="M0 0 L14 14" stroke="#555" stroke-width="1"/></svg>
<svg style="left:1510px;top:130px;" width="6" height="15" viewBox="0 0 6 15"><circle cx="3" cy="2.5" r="2" fill="none" stroke="#666" stroke-width="1"/><circle cx="3" cy="7.0" r="2" fill="none" stroke="#666" stroke-width="1"/><circle cx="3" cy="11.5" r="2" fill="none" stroke="#666" stroke-width="1"/></svg>
<svg style="left:1249px;top:152px;" width="12" height="12" viewBox="0 0 12 12"><rect x="1" y="1" width="4" height="4" fill="#2a70b8"/><path d="M6 1 H11 V11 H2 V7 H6 Z" fill="#3a80c8"/></svg>
<div class="t" style="left:1273px;top:150.84px;font-size:12px;color:#000;font-family:'Liberation Sans', sans-serif;transform:scaleX(0.9600);">C:\Users\nxf47231\Documents\MCUXpressoIDE_</div>
<svg style="left:1249px;top:170px;" width="12" height="12" viewBox="0 0 12 12"><rect x="1" y="1" width="4" height="4" fill="#2a70b8"/><path d="M6 1 H11 V11 H2 V7 H6 Z" fill="#3a80c8"/></svg>
<div class="t" style="left:1273px;top:168.84px;font-size:12px;color:#000;font-family:'Liberation Sans', sans-serif;transform:scaleX(0.9600);">C:\Users\nxf47231\Documents\MCUXpressoIDE_</div>
<svg style="left:1249px;top:188px;" width="12" height="12" viewBox="0 0 12 12"><rect x="1" y="1" width="4" height="4" fill="#2a70b8"/><path d="M6 1 H11 V11 H2 V7 H6 Z" fill="#3a80c8"/></svg>
<div class="t" style="left:1273px;top:186.84px;font-size:12px;color:#000;font-family:'Liberation Sans', sans-serif;transform:scaleX(0.9925);">app.h</div>
<svg style="left:1249px;top:206px;" width="12" height="12" viewBox="0 0 12 12"><rect x="1" y="1" width="4" height="4" fill="#2a70b8"/><path d="M6 1 H11 V11 H2 V7 H6 Z" fill="#3a80c8"/></svg>
<div class="t" style="left:1273px;top:204.84px;font-size:12px;color:#000;font-family:'Liberation Sans', sans-serif;transform:scaleX(0.9822);">app_conn.h</div>
<svg style="left:1249px;top:224px;" width="12" height="12" viewBox="0 0 12 12"><rect x="1" y="1" width="4" height="4" fill="#2a70b8"/><path d="M6 1 H11 V11 H2 V7 H6 Z" fill="#3a80c8"/></svg>
<div class="t" style="left:1273px;top:222.84px;font-size:12px;color:#000;font-family:'Liberation Sans', sans-serif;transform:scaleX(0.9604);">fsl_os_abstraction.h</div>
<svg style="left:1249px;top:242px;" width="12" height="12" viewBox="0 0 12 12"><rect x="1" y="1" width="4" height="4" fill="#2a70b8"/><path d="M6 1 H11 V11 H2 V7 H6 Z" fill="#3a80c8"/><path d="M0 13 L12 1" stroke="#8a8a8a" stroke-width="1.3"/></svg>
<div class="t" style="left:1273px;top:240.84px;font-size:12px;color:#8c8c8c;font-family:'Liberation Sans', sans-serif;transform:scaleX(0.9669);">app_lce_init.h</div>
<svg style="left:1248px;top:259px;" width="13" height="14" viewBox="0 0 13 14"><path d="M0 7.5 H12 M2.5 3 V12 M9.5 3 V12 M5.5 1 H6.8 M5.5 13 H6.8" stroke="#2a9a4a" stroke-width="1.1"/></svg>
<svg style="left:1262px;top:256px;" width="8" height="9" viewBox="0 0 8 9"><text x="0" y="7.5" font-size="9.5" font-family="Liberation Sans" fill="#c8102e">S</text></svg>
<div class="t" style="left:1273px;top:258.84px;font-size:12px;color:#000;font-family:'Liberation Sans', sans-serif;transform:scaleX(0.9759);">start_task(void*)</div>
<div class="t" style="left:1357.6px;top:258.84px;font-size:12px;color:#957d47;font-family:'Liberation Sans', sans-serif;transform:scaleX(0.9964);"> : void</div>
<svg style="left:1248px;top:278px;" width="12" height="12" viewBox="0 0 12 12"><circle cx="5.5" cy="5.5" r="4.5" fill="#2a6ab0"/><path d="M2 4.5 Q5.5 3 9 4.5" stroke="#8ab4e8" stroke-width="1" fill="none"/><rect x="1" y="5.2" width="9" height="1" fill="#d8e8f8"/></svg>
<svg style="left:1262px;top:274px;" width="8" height="9" viewBox="0 0 8 9"><text x="0" y="7.5" font-size="9.5" font-family="Liberation Sans" fill="#c8102e">S</text></svg>
<div class="t" style="left:1273px;top:276.84px;font-size:12px;color:#000;font-family:'Liberation Sans', sans-serif;transform:scaleX(0.9432);">s_startTaskHandle</div>
<div class="t" style="left:1366.1px;top:276.84px;font-size:12px;color:#957d47;font-family:'Liberation Sans', sans-serif;transform:scaleX(0.9820);"> : uint32_t[]</div>
<svg style="left:1248px;top:297px;" width="12" height="12" viewBox="0 0 12 12"><path d="M5.5 1 A4.5 4.5 0 1 0 10 5.5 H5.5 Z" fill="#2a6ab0"/><path d="M2 5 Q3.5 3.5 5 3.5" stroke="#8ab4e8" stroke-width="1" fill="none"/></svg>
<svg style="left:1258px;top:292px;" width="12" height="9" viewBox="0 0 12 9"><text x="0" y="8.5" font-size="9.5" font-family="Liberation Sans" fill="#c8102e">S</text><text x="7.5" y="8" font-size="8" font-weight="bold" font-family="Liberation Sans" fill="#2a4a8a">c</text></svg>
<div class="t" style="left:1273px;top:294.84px;font-size:12px;color:#000;font-family:'Liberation Sans', sans-serif;transform:scaleX(0.9408);">os_thread_def_start_task</div>
<div class="t" style="left:1400.4px;top:294.84px;font-size:12px;color:#957d47;font-family:'Liberation Sans', sans-serif;transform:scaleX(0.9368);"> : const osa_task_def_t</div>
<svg style="left:1250px;top:316px;" width="9" height="9" viewBox="0 0 9 9"><circle cx="4.5" cy="4.5" r="3.8" fill="#4caf50" stroke="#2e7d32" stroke-width="0.8"/></svg>
<svg style="left:1262px;top:310px;" width="8" height="9" viewBox="0 0 8 9"><text x="0" y="7.5" font-size="9.5" font-family="Liberation Sans" fill="#c8102e">S</text></svg>
<div class="t" style="left:1273px;top:312.84px;font-size:12px;color:#000;font-family:'Liberation Sans', sans-serif;transform:scaleX(0.9759);">start_task(void*)</div>
<div class="t" style="left:1357.6px;top:312.84px;font-size:12px;color:#957d47;font-family:'Liberation Sans', sans-serif;transform:scaleX(0.9964);"> : void</div>
<div style="left:1244px;top:328px;width:112px;height:18px;background:#d9d9d9;"></div>
<svg style="left:1250px;top:334px;" width="9" height="9" viewBox="0 0 9 9"><circle cx="4.5" cy="4.5" r="3.8" fill="#4caf50" stroke="#2e7d32" stroke-width="0.8"/></svg>
<div class="t" style="left:1273px;top:330.84px;font-size:12px;color:#000;font-family:'Liberation Sans', sans-serif;transform:scaleX(1.0319);">main(void) : int</div>
<div style="left:1526px;top:100px;width:4px;height:533px;background:#f0f0f0;"></div>
<div style="left:1221px;top:616px;width:305px;height:16px;background:#f0f0f0;"></div>
<div style="left:1238px;top:617px;width:110px;height:14px;background:#cdcdcd;"></div>
<svg style="left:1227px;top:619px;" width="6" height="10" viewBox="0 0 6 10"><path d="M5.5 1 L1.5 5 L5.5 9" fill="none" stroke="#606060" stroke-width="1.8"/></svg>
<svg style="left:1516px;top:619px;" width="6" height="10" viewBox="0 0 6 10"><path d="M0.5 1 L4.5 5 L0.5 9" fill="none" stroke="#606060" stroke-width="1.8"/></svg>
<div style="left:-1px;top:638px;width:404px;height:550px;background:#d9d9d9;"></div>
<div style="left:0px;top:639px;width:402px;height:548px;background:#ffffff;"></div>
<div style="left:0px;top:639px;width:402px;height:25px;background:#e5e5e5;"></div>
<div style="left:0px;top:639px;width:134px;height:25px;background:#f2f2f2;"></div>
<div style="left:134px;top:639px;width:1px;height:25px;background:#d6d6d6;"></div>
<div style="left:134px;top:663px;width:268px;height:1px;background:#d6d6d6;"></div>
<svg style="left:4px;top:645px;" width="15" height="15" viewBox="0 0 15 15"><path d="M4.2 3.2 A5.8 5.8 0 1 0 10.8 3.2" fill="none" stroke="#2a8ad8" stroke-width="1.9"/><path d="M7.5 0.8 V7.5" stroke="#2a8ad8" stroke-width="1.9"/></svg>
<div class="t" style="left:23px;top:645.84px;font-size:12px;color:#000;font-family:'Liberation Sans', sans-serif;transform:scaleX(0.9655);">Quickstart Panel</div>
<svg style="left:117px;top:649px;" width="10" height="10" viewBox="0 0 10 10"><path d="M0.5 0.5 L9.5 9.5 M9.5 0.5 L0.5 9.5" stroke="#1a1a1a" stroke-width="1.1"/></svg>
<svg style="left:138px;top:648px;" width="17" height="10" viewBox="0 0 17 10"><g fill="none" stroke="#3a8ad0" stroke-width="1.3"><path d="M2.8 0.3 Q0.2 4.5 2.8 8.7"/><path d="M3.8 2.4 L7.6 8.2 M7.6 2.4 L3.8 8.2"/><path d="M8.6 0.3 Q11.2 4.5 8.6 8.7"/></g><rect x="12" y="3.2" width="4.5" height="1.3" fill="#3a8ad0"/><rect x="12" y="5.8" width="4.5" height="1.3" fill="#3a8ad0"/></svg>
<div class="t" style="left:157px;top:645.84px;font-size:12px;color:#000;font-family:'Liberation Sans', sans-serif;transform:scaleX(0.9362);">Variables</div>
<svg style="left:215px;top:645px;" width="15" height="15" viewBox="0 0 15 15"><circle cx="4.5" cy="4.5" r="3.6" fill="#5a8ad0" stroke="#2a5aa0" stroke-width="0.8"/><circle cx="10.5" cy="10.5" r="3.6" fill="#5a8ad0" stroke="#2a5aa0" stroke-width="0.8"/></svg>
<div class="t" style="left:234px;top:645.84px;font-size:12px;color:#000;font-family:'Liberation Sans', sans-serif;transform:scaleX(0.9627);">Breakpoints</div>
<svg style="left:359px;top:647px;" width="11" height="5" viewBox="0 0 11 5"><rect x="0.5" y="0.5" width="9" height="3" fill="none" stroke="#000" stroke-width="1.15"/></svg>
<svg style="left:382px;top:647px;" width="11" height="11" viewBox="0 0 11 11"><rect x="0.5" y="0.5" width="9" height="9" fill="none" stroke="#000" stroke-width="1.15"/><path d="M0.5 2.5 H9.5" stroke="#000" stroke-width="1.15"/></svg>
<svg style="left:9px;top:676px;" width="33" height="33" viewBox="0 0 33 33"><rect x="0.5" y="0.5" width="32" height="32" rx="5" fill="#ffffff" stroke="#1a3a96"/><path d="M5 0.5 H28 A4.5 4.5 0 0 1 32.5 5 V21 H0.5 V5 A4.5 4.5 0 0 1 5 0.5 Z" fill="#1a3a96"/><path d="M9 3 L24 21 M24 3 L9 21" stroke="#9a98d8" stroke-width="5"/><text x="16.5" y="30" font-size="7.5" font-family="Liberation Sans" font-weight="bold" fill="#1a3a96" text-anchor="middle">IDE</text></svg>
<div class="t" style="left:51.5px;top:677.88px;font-size:15.5px;color:#1c3c8e;font-family:'Liberation Sans', sans-serif;font-weight:bold;transform:scaleX(0.9972);">MCUXpresso IDE Quickstart</div>
<div class="t" style="left:51.5px;top:696.84px;font-size:12px;color:#000;font-family:'Liberation Sans', sans-serif;transform:scaleX(0.9587);">Project: kw47evk_wireless_uart_freertos [Debug]</div>
<div style="left:6px;top:722px;width:389px;height:19px;background:#e8e8e8;"></div>
<svg style="left:12px;top:730px;" width="8" height="5" viewBox="0 0 8 5"><path d="M0 0 H7.5 L3.75 4.5 Z" fill="#1a1a1a"/></svg>
<div class="t" style="left:25px;top:724.84px;font-size:12px;color:#000;font-family:'Liberation Sans', sans-serif;font-weight:bold;transform:scaleX(0.9884);">Create or import a project</div>
<svg style="left:53px;top:750px;" width="16" height="16" viewBox="0 0 16 16"><rect x="0.5" y="0.5" width="15" height="15" rx="2.5" fill="#8d93d6" stroke="#3a46a8"/><path d="M4 3.5 L12 12.5 M12 3.5 L4 12.5" stroke="#1a2690" stroke-width="2.4"/></svg>
<div class="t" style="left:74px;top:752.84px;font-size:12px;color:#1f6fd0;font-family:'Liberation Sans', sans-serif;transform:scaleX(0.9891);">Create a new C/C++ project...</div>
<svg style="left:53px;top:769px;" width="16" height="16" viewBox="0 0 16 16"><rect x="0.5" y="0.5" width="15" height="15" rx="2.5" fill="#68c0c8" stroke="#1a7a8a"/><path d="M4 3.5 L12 12.5 M12 3.5 L4 12.5" stroke="#0a4a5a" stroke-width="2.4"/></svg>
<div class="t" style="left:74px;top:771.84px;font-size:12px;color:#1f6fd0;font-family:'Liberation Sans', sans-serif;transform:scaleX(0.9577);">Import SDK example(s)...</div>
<svg style="left:53px;top:788px;" width="16" height="16" viewBox="0 0 16 16"><rect x="0.5" y="0.5" width="15" height="15" rx="2.5" fill="#b0083a" stroke="#a0002a"/><path d="M4 3.5 L12 12.5 M12 3.5 L4 12.5" stroke="#e8a0b0" stroke-width="2.4"/></svg>
<div class="t" style="left:74px;top:790.84px;font-size:12px;color:#1f6fd0;font-family:'Liberation Sans', sans-serif;transform:scaleX(1.0206);">Import from Application Code Hub...</div>
<svg style="left:53px;top:807px;" width="16" height="16" viewBox="0 0 16 16"><circle cx="8" cy="8" r="7" fill="#dde8f6" stroke="#8aa0c0"/><circle cx="8" cy="6" r="3" fill="#1a3a7a"/><path d="M8 8 V13" stroke="#1a3a7a" stroke-width="1.6"/></svg>
<div class="t" style="left:74px;top:809.84px;font-size:12px;color:#1f6fd0;font-family:'Liberation Sans', sans-serif;">Import project(s) from file system...</div>
<svg style="left:53px;top:826px;" width="16" height="16" viewBox="0 0 16 16"><path d="M0.5 8.5 H4 L5 7 H15.5 V15.5 H0.5 Z" fill="#f5d88a" stroke="#b8862c"/><rect x="5.5" y="0.5" width="8" height="9" fill="#eef2fb" stroke="#4a6ab0"/><text x="7" y="8" font-size="7" font-weight="bold" font-family="Liberation Sans" fill="#2a4a9a">C</text><path d="M0.5 15.5 L3 10.5 H15.5 L13 15.5 Z" fill="#fbe6a6" stroke="#b8862c"/></svg>
<div class="t" style="left:74px;top:828.84px;font-size:12px;color:#1f6fd0;font-family:'Liberation Sans', sans-serif;">Import executable from file system...</div>
<svg style="left:15px;top:780px;" width="33" height="33" viewBox="0 0 33 33"><rect x="0" y="0" width="32" height="32" rx="5" fill="#163c94"/><path d="M3 7 L6 9.5 L3 12" fill="none" stroke="#fff" stroke-width="1.4"/><path d="M7 12 H11" stroke="#fff" stroke-width="1.4"/><path d="M10 27 L12 20 L24 7 L27 10 L15 23 Z" fill="none" stroke="#fff" stroke-width="2"/><path d="M22 9 L25 12" stroke="#fff" stroke-width="1.5"/></svg>
<div style="left:6px;top:856px;width:389px;height:19px;background:#e8e8e8;"></div>
<svg style="left:12px;top:864px;" width="8" height="5" viewBox="0 0 8 5"><path d="M0 0 H7.5 L3.75 4.5 Z" fill="#1a1a1a"/></svg>
<div class="t" style="left:25px;top:858.84px;font-size:12px;color:#000;font-family:'Liberation Sans', sans-serif;font-weight:bold;transform:scaleX(0.9643);">Build your project</div>
<svg style="left:54px;top:885px;" width="17" height="17" viewBox="0 0 17 17"><path d="M6.5 6.5 L13.5 15" stroke="#7a4a1a" stroke-width="3.6"/><path d="M6.5 6.5 L13.5 15" stroke="#c08040" stroke-width="2.2"/><path d="M0.8 7 Q0 5 2 3.2 L4.8 0.9 Q7 0.2 10 0.8 L11 1.8 Q9.5 3.2 7.8 3.4 L8.6 5.2 L5.6 8.2 L4.2 7 Q2.5 8.4 0.8 7 Z" fill="#9a9a9a" stroke="#4a4a4a" stroke-width="0.9"/></svg>
<div class="t" style="left:74px;top:886.84px;font-size:12px;color:#1f6fd0;font-family:'Liberation Sans', sans-serif;transform:scaleX(1.0119);">Build</div>
<svg style="left:54px;top:903px;" width="16" height="16" viewBox="0 0 16 16"><path d="M14 1 L8 8" stroke="#8a4a2a" stroke-width="1.3"/><path d="M8 6 L11 9 L5 15 Q1 16 1 12 Z" fill="#e0c040" stroke="#a08020" stroke-width="0.8"/></svg>
<div class="t" style="left:74px;top:905.84px;font-size:12px;color:#1f6fd0;font-family:'Liberation Sans', sans-serif;transform:scaleX(0.9250);">Clean</div>
<svg style="left:15px;top:886px;" width="33" height="33" viewBox="0 0 33 33"><rect x="0" y="0" width="32" height="32" rx="5" fill="#163c94"/><circle cx="20.5" cy="20.5" r="7.0" fill="#fff"/><rect x="19.50" y="11.70" width="2.0" height="2.80" fill="#fff" transform="rotate(0.0 20.5 20.5)"/><rect x="19.50" y="11.70" width="2.0" height="2.80" fill="#fff" transform="rotate(30.0 20.5 20.5)"/><rect x="19.50" y="11.70" width="2.0" height="2.80" fill="#fff" transform="rotate(60.0 20.5 20.5)"/><rect x="19.50" y="11.70" width="2.0" height="2.80" fill="#fff" transform="rotate(90.0 20.5 20.5)"/><rect x="19.50" y="11.70" width="2.0" height="2.80" fill="#fff" transform="rotate(120.0 20.5 20.5)"/><rect x="19.50" y="11.70" width="2.0" height="2.80" fill="#fff" transform="rotate(150.0 20.5 20.5)"/><rect x="19.50" y="11.70" width="2.0" height="2.80" fill="#fff" transform="rotate(180.0 20.5 20.5)"/><rect x="19.50" y="11.70" width="2.0" height="2.80" fill="#fff" transform="rotate(210.0 20.5 20.5)"/><rect x="19.50" y="11.70" width="2.0" height="2.80" fill="#fff" transform="rotate(240.0 20.5 20.5)"/><rect x="19.50" y="11.70" width="2.0" height="2.80" fill="#fff" transform="rotate(270.0 20.5 20.5)"/><rect x="19.50" y="11.70" width="2.0" height="2.80" fill="#fff" transform="rotate(300.0 20.5 20.5)"/><rect x="19.50" y="11.70" width="2.0" height="2.80" fill="#fff" transform="rotate(330.0 20.5 20.5)"/><circle cx="20.5" cy="20.5" r="4.2" fill="#163c94"/><circle cx="14" cy="7" r="3.9" fill="#fff"/><rect x="13.25" y="1.90" width="1.5" height="2.20" fill="#fff" transform="rotate(0.0 14 7)"/><rect x="13.25" y="1.90" width="1.5" height="2.20" fill="#fff" transform="rotate(40.0 14 7)"/><rect x="13.25" y="1.90" width="1.5" height="2.20" fill="#fff" transform="rotate(80.0 14 7)"/><rect x="13.25" y="1.90" width="1.5" height="2.20" fill="#fff" transform="rotate(120.0 14 7)"/><rect x="13.25" y="1.90" width="1.5" height="2.20" fill="#fff" transform="rotate(160.0 14 7)"/><rect x="13.25" y="1.90" width="1.5" height="2.20" fill="#fff" transform="rotate(200.0 14 7)"/><rect x="13.25" y="1.90" width="1.5" height="2.20" fill="#fff" transform="rotate(240.0 14 7)"/><rect x="13.25" y="1.90" width="1.5" height="2.20" fill="#fff" transform="rotate(280.0 14 7)"/><rect x="13.25" y="1.90" width="1.5" height="2.20" fill="#fff" transform="rotate(320.0 14 7)"/><circle cx="14" cy="7" r="2.3" fill="#163c94"/><circle cx="7.3" cy="14.5" r="3.0" fill="#fff"/><rect x="6.65" y="10.40" width="1.3" height="2.10" fill="#fff" transform="rotate(0.0 7.3 14.5)"/><rect x="6.65" y="10.40" width="1.3" height="2.10" fill="#fff" transform="rotate(45.0 7.3 14.5)"/><rect x="6.65" y="10.40" width="1.3" height="2.10" fill="#fff" transform="rotate(90.0 7.3 14.5)"/><rect x="6.65" y="10.40" width="1.3" height="2.10" fill="#fff" transform="rotate(135.0 7.3 14.5)"/><rect x="6.65" y="10.40" width="1.3" height="2.10" fill="#fff" transform="rotate(180.0 7.3 14.5)"/><rect x="6.65" y="10.40" width="1.3" height="2.10" fill="#fff" transform="rotate(225.0 7.3 14.5)"/><rect x="6.65" y="10.40" width="1.3" height="2.10" fill="#fff" transform="rotate(270.0 7.3 14.5)"/><rect x="6.65" y="10.40" width="1.3" height="2.10" fill="#fff" transform="rotate(315.0 7.3 14.5)"/><circle cx="7.3" cy="14.5" r="1.8" fill="#163c94"/></svg>
<div style="left:6px;top:933px;width:389px;height:26px;background:#e8e8e8;"></div>
<svg style="left:12px;top:944px;" width="8" height="5" viewBox="0 0 8 5"><path d="M0 0 H7.5 L3.75 4.5 Z" fill="#1a1a1a"/></svg>
<div class="t" style="left:25px;top:939.84px;font-size:12px;color:#000;font-family:'Liberation Sans', sans-serif;font-weight:bold;transform:scaleX(0.9818);">Debug your project</div>
<svg style="left:281px;top:937px;" width="16" height="16" viewBox="0 0 16 16"><rect width="16" height="16" rx="3" fill="#163c94"/><text x="8" y="12.5" font-size="10" font-family="Liberation Sans" font-weight="bold" fill="#fff" text-anchor="middle">LS</text></svg>
<svg style="left:304px;top:943px;" width="8" height="4" viewBox="0 0 8 4"><path d="M0 0 H8 L4 4 Z" fill="#1a1a1a"/></svg>
<svg style="left:319px;top:937px;" width="16" height="16" viewBox="0 0 16 16"><rect x="0.5" y="0.5" width="15" height="15" fill="#ffffff" stroke="#1a1a9a"/><path d="M1 1 H15 V11 H1 Z" fill="#1a1a9a"/><path d="M3 2.5 H7 V6.5 H3 Z M8.5 2.5 H13 V4.5 H10.5 V6 H13 V9 H8.5 Z" fill="#fff"/><path d="M6 5 V10" stroke="#fff" stroke-width="1"/><path d="M2.5 13.3 H4.5 M6 13.3 H8 M9.5 13.3 H11.5 M13 13.3 H14" stroke="#1a1a9a" stroke-width="1.8"/></svg>
<svg style="left:342px;top:943px;" width="8" height="4" viewBox="0 0 8 4"><path d="M0 0 H8 L4 4 Z" fill="#1a1a1a"/></svg>
<svg style="left:357px;top:937px;" width="16" height="16" viewBox="0 0 16 16"><rect width="16" height="16" fill="#0000f0"/><path d="M5.2 1.8 H10.2 V6.2 Q10.2 8.6 7.6 8.6 Q5.2 8.6 5.2 6.6" fill="none" stroke="#fff" stroke-width="2"/><text x="8" y="15" font-size="6.6" font-family="Liberation Sans" font-weight="bold" fill="#fff" text-anchor="middle" textLength="13" lengthAdjust="spacingAndGlyphs">Link</text></svg>
<svg style="left:380px;top:943px;" width="8" height="4" viewBox="0 0 8 4"><path d="M0 0 H8 L4 4 Z" fill="#1a1a1a"/></svg>
<svg style="left:54px;top:969px;" width="15" height="15" viewBox="0 0 15 15"><g stroke="#2a40c0" stroke-width="1.2" stroke-linecap="round" fill="none"><path d="M4.5 3 V0.6 M8.5 3.2 L9.6 1.2 M3 4.8 H0.6 M3.5 7 L1.3 8.3 M10.8 4.6 L13.6 5.5 M12 8.6 L14.2 10.4 M5.2 10.2 L6 14 M9.2 11.6 L10.6 14.2"/></g><ellipse cx="8.2" cy="8" rx="3.9" ry="5.2" transform="rotate(-45 8.2 8)" fill="#4a9cf0" stroke="#5a10a8" stroke-width="1.1"/><path d="M7 6.5 L10 9.5" stroke="#ffffff" stroke-opacity="0.45" stroke-width="1"/><circle cx="4.6" cy="4.6" r="1.9" fill="#8ac8ff" stroke="#5a10a8" stroke-width="1"/></svg>
<div class="t" style="left:74px;top:971.34px;font-size:12px;color:#1f6fd0;font-family:'Liberation Sans', sans-serif;transform:scaleX(0.9616);">Debug</div>
<svg style="left:54px;top:988px;" width="15" height="15" viewBox="0 0 15 15"><g stroke="#2a40c0" stroke-width="1.2" stroke-linecap="round" fill="none"><path d="M4.5 3 V0.6 M8.5 3.2 L9.6 1.2 M3 4.8 H0.6 M3.5 7 L1.3 8.3 M10.8 4.6 L13.6 5.5 M12 8.6 L14.2 10.4 M5.2 10.2 L6 14 M9.2 11.6 L10.6 14.2"/></g><ellipse cx="8.2" cy="8" rx="3.9" ry="5.2" transform="rotate(-45 8.2 8)" fill="#4a9cf0" stroke="#5a10a8" stroke-width="1.1"/><path d="M7 6.5 L10 9.5" stroke="#ffffff" stroke-opacity="0.45" stroke-width="1"/><circle cx="4.6" cy="4.6" r="1.9" fill="#8ac8ff" stroke="#5a10a8" stroke-width="1"/></svg>
<div class="t" style="left:74px;top:989.84px;font-size:12px;color:#1f6fd0;font-family:'Liberation Sans', sans-serif;transform:scaleX(0.9792);">Terminate, Build and Debug</div>
<svg style="left:15px;top:970px;" width="33" height="33" viewBox="0 0 33 33"><rect x="0" y="0" width="32" height="32" rx="5" fill="#163c94"/><path d="M11 9 A5 5 0 0 1 21 9 Z" fill="#fff"/><path d="M8 13 Q8 10 11 10 H21 Q24 10 24 13 V20 Q24 27 16 27.5 Q8 27 8 20 Z" fill="#fff"/><g stroke="#fff" stroke-width="1.7" fill="none"><path d="M8.5 13.5 H5.5 L4.5 5.5 M23.5 13.5 H26.5 L27.5 5.5 M8 18.5 H3.5 M24 18.5 H28.5 M8.5 22.5 L6 24.5 V29.5 M23.5 22.5 L26 24.5 V29.5"/></g><circle cx="16" cy="18.5" r="5" fill="none" stroke="#163c94" stroke-width="1"/><circle cx="16" cy="18.5" r="2.8" fill="none" stroke="#163c94" stroke-width="1"/><circle cx="16" cy="18.5" r="1" fill="#163c94"/></svg>
<div style="left:6px;top:1017px;width:389px;height:18px;background:#e8e8e8;"></div>
<svg style="left:12px;top:1024px;" width="8" height="5" viewBox="0 0 8 5"><path d="M0 0 H7.5 L3.75 4.5 Z" fill="#1a1a1a"/></svg>
<div class="t" style="left:25px;top:1019.84px;font-size:12px;color:#000;font-family:'Liberation Sans', sans-serif;font-weight:bold;transform:scaleX(0.9388);">Miscellaneous</div>
<svg style="left:11px;top:1040px;" width="16" height="16" viewBox="0 0 16 16"><circle cx="8.5" cy="8.5" r="6" fill="#eef4fa" stroke="#3a8ad0" stroke-width="1.2" stroke-dasharray="1.6 1"/><path d="M2 2 L10 10" stroke="#2a4a8a" stroke-width="2.4"/><path d="M2.5 2.5 L9.5 9.5" stroke="#f0e090" stroke-width="1.1"/></svg>
<div class="t" style="left:32px;top:1042.84px;font-size:12px;color:#1f6fd0;font-family:'Liberation Sans', sans-serif;transform:scaleX(0.9932);">Edit project settings</div>
<svg style="left:11px;top:1059px;" width="16" height="16" viewBox="0 0 16 16"><rect x="0.5" y="0.5" width="15" height="15" rx="2.5" fill="#6a9a88" stroke="#2a5a4a"/><path d="M4 3.5 L12 12.5 M12 3.5 L4 12.5" stroke="#0a3a2a" stroke-width="2.4"/></svg>
<div class="t" style="left:32px;top:1061.84px;font-size:12px;color:#1f6fd0;font-family:'Liberation Sans', sans-serif;transform:scaleX(0.9837);">MCUXpresso Config Tools&gt;&gt;</div>
<svg style="left:11px;top:1078px;" width="16" height="16" viewBox="0 0 16 16"><path d="M0.5 7.5 H5 L6 6 H13.5 V15.5 H0.5 Z" fill="#f5c860" stroke="#b8802a"/><path d="M0.5 15.5 L3 9.5 H15.5 L13 15.5 Z" fill="#fbe0a0" stroke="#b8802a"/><circle cx="10" cy="4" r="3.5" fill="#fff" stroke="#5a5a5a" stroke-dasharray="1 0.8"/><path d="M8 2 L12 6" stroke="#3a3a3a"/></svg>
<div class="t" style="left:32px;top:1080.84px;font-size:12px;color:#1f6fd0;font-family:'Liberation Sans', sans-serif;transform:scaleX(0.9849);">Quick Settings&gt;&gt;</div>
<svg style="left:11px;top:1097px;" width="16" height="16" viewBox="0 0 16 16"><path d="M5 13 V3 Q5 0.8 7.5 0.8 H10 Q12 0.8 12 3 V4.5" fill="none" stroke="#a8a8a8" stroke-width="1.6"/><path d="M8 4.5 H14 V9 H10 V11 H8 Z" fill="#f4f4f4" stroke="#a8a8a8" stroke-width="1.2"/><path d="M3 14.5 H13" stroke="#a8a8a8" stroke-width="1.5"/><path d="M0 14 H3 V16.5 Z" fill="#808080"/></svg>
<div class="t" style="left:32px;top:1099.84px;font-size:12px;color:#a9c9ee;font-family:'Liberation Sans', sans-serif;transform:scaleX(0.9880);">Export project(s) to archive (zip)</div>
<svg style="left:11px;top:1116px;" width="16" height="16" viewBox="0 0 16 16"><path d="M5 13 V3 Q5 0.8 7.5 0.8 H10 Q12 0.8 12 3 V4.5" fill="none" stroke="#a8a8a8" stroke-width="1.6"/><path d="M8 4.5 H14 V9 H10 V11 H8 Z" fill="#f4f4f4" stroke="#a8a8a8" stroke-width="1.2"/><path d="M3 14.5 H13" stroke="#a8a8a8" stroke-width="1.5"/><path d="M0 14 H3 V16.5 Z" fill="#808080"/></svg>
<div class="t" style="left:32px;top:1118.84px;font-size:12px;color:#a9c9ee;font-family:'Liberation Sans', sans-serif;transform:scaleX(0.9786);">Export project(s) and references to archive (zip)</div>
<svg style="left:11px;top:1135px;" width="16" height="16" viewBox="0 0 16 16"><path d="M2.5 0.5 H10 L13.5 4 V15.5 H2.5 Z" fill="#f4f8fd" stroke="#9aa4b8"/><path d="M10 0.5 V4 H13.5" fill="#e8d8a8" stroke="#c0a868"/><path d="M4.5 3.5 H9 M4.5 5.5 H11" stroke="#6a8ac0"/><text x="2.5" y="14" font-size="7.5" font-weight="bold" font-family="Liberation Sans" fill="#1a3a6a" textLength="12" lengthAdjust="spacingAndGlyphs">010</text></svg>
<div class="t" style="left:32px;top:1137.84px;font-size:12px;color:#1f6fd0;font-family:'Liberation Sans', sans-serif;transform:scaleX(0.9958);">Build all projects</div>
<div style="left:407px;top:637px;width:813px;height:551px;background:#d9d9d9;"></div>
<div style="left:408px;top:638px;width:811px;height:549px;background:#ffffff;"></div>
<div style="left:408px;top:638px;width:811px;height:25px;background:#e5e5e5;"></div>
<div style="left:408px;top:663px;width:811px;height:37px;background:#f0f0f0;"></div>
<div style="left:408px;top:700px;width:811px;height:1px;background:#a0a0a0;"></div>
<div style="left:673px;top:638px;width:94px;height:25px;background:#f2f2f2;"></div>
<div style="left:767px;top:638px;width:1px;height:25px;background:#d6d6d6;"></div>
<div style="left:673px;top:638px;width:1px;height:25px;background:#d6d6d6;"></div>
<div style="left:408px;top:662px;width:266px;height:1px;background:#d6d6d6;"></div>
<div style="left:767px;top:662px;width:452px;height:1px;background:#d6d6d6;"></div>
<svg style="left:414px;top:644px;" width="11" height="15" viewBox="0 0 11 15"><rect x="0.5" y="1.5" width="10" height="12" rx="3" fill="#f0d050" stroke="#b89020"/><ellipse cx="5.5" cy="2.5" rx="5" ry="2" fill="#f8e890" stroke="#b89020"/></svg>
<div class="t" style="left:432px;top:644.84px;font-size:12px;color:#000;font-family:'Liberation Sans', sans-serif;transform:scaleX(0.9149);">Installed SDKs</div>
<svg style="left:516px;top:644px;" width="15" height="14" viewBox="0 0 15 14"><rect x="0.5" y="0.5" width="14" height="13" fill="#fafafa" stroke="#7a8aa8"/><rect x="1" y="1" width="13" height="2.5" fill="#9ab0d0"/><path d="M1 6 H14 M1 9 H14 M1 12 H14 M5 3 V13" stroke="#a0b0c8"/></svg>
<div class="t" style="left:535px;top:644.84px;font-size:12px;color:#000;font-family:'Liberation Sans', sans-serif;transform:scaleX(0.9508);">Properties</div>
<svg style="left:598px;top:644px;" width="15" height="15" viewBox="0 0 15 15"><path d="M0.5 0.5 H11.5 Q13.5 2 12.5 5 Q11.5 9 13.5 14.5 H0.5 Z" fill="#e4eefa" stroke="#8a96b0"/><path d="M1 7.5 H13 M7 1 V14" stroke="#a8b8d0"/><circle cx="4.3" cy="4.2" r="2.4" fill="#e02020"/><path d="M2 13.5 Q2 9.5 4.3 9 Q6.6 9.5 6.6 13.5 Z" fill="#f8a820"/></svg>
<div class="t" style="left:618px;top:644.84px;font-size:12px;color:#000;font-family:'Liberation Sans', sans-serif;transform:scaleX(0.9668);">Problems</div>
<svg style="left:680px;top:644px;" width="14" height="15" viewBox="0 0 14 15"><rect x="0.8" y="0.8" width="12.4" height="9.5" rx="1.2" fill="#fff" stroke="#2a5aa0" stroke-width="1.6"/><path d="M3.5 4 H9.5 M3.5 6.5 H8" stroke="#2a5aa0"/><path d="M4.5 12 H9.5 M3 14 H11" stroke="#2a5aa0" stroke-width="1.4"/></svg>
<div class="t" style="left:697px;top:644.84px;font-size:12px;color:#000;font-family:'Liberation Sans', sans-serif;transform:scaleX(0.9767);">Console</div>
<svg style="left:771px;top:644px;" width="16" height="15" viewBox="0 0 16 15"><rect x="5.5" y="0.5" width="10" height="8.5" rx="1" fill="#404040" stroke="#202020"/><rect x="7" y="2" width="7" height="5.5" fill="#1a5ad8"/><path d="M0.5 12.5 L5 8 L8.5 11.5 L4 15 Z" fill="#d8d8d8" stroke="#404040" stroke-width="0.8"/><path d="M4.5 8.5 L8 12" stroke="#e0d020" stroke-width="1.3"/></svg>
<div class="t" style="left:791px;top:644.84px;font-size:12px;color:#000;font-family:'Liberation Sans', sans-serif;transform:scaleX(0.9704);">Terminal</div>
<svg style="left:847px;top:644px;" width="13" height="15" viewBox="0 0 13 15"><path d="M0.5 0.5 H8.5 L12 4 V14.5 H0.5 Z" fill="#f4f8fd" stroke="#9aa4b8"/><path d="M8.5 0.5 V4 H12" fill="#e8d8a8" stroke="#c0a868"/><path d="M2.5 3 H7 M2.5 5 H9" stroke="#6a8ac0"/><text x="1" y="13.5" font-size="7" font-weight="bold" font-family="Liberation Sans" fill="#1a3a6a" textLength="11" lengthAdjust="spacingAndGlyphs">010</text></svg>
<div class="t" style="left:865px;top:644.84px;font-size:12px;color:#000;font-family:'Liberation Sans', sans-serif;transform:scaleX(0.9877);">Image Info</div>
<svg style="left:934px;top:644px;" width="16" height="15" viewBox="0 0 16 15"><rect x="0.5" y="0.5" width="12" height="10" fill="#e8eef8" stroke="#2a4a8a"/><path d="M2.5 3.5 H10 M2.5 6.5 H8" stroke="#2a4a8a"/><circle cx="11.5" cy="10.5" r="3.5" fill="#4aa04a" stroke="#2a6a2a"/></svg>
<div class="t" style="left:952px;top:644.84px;font-size:12px;color:#000;font-family:'Liberation Sans', sans-serif;transform:scaleX(0.9654);">Debugger Con...</div>
<svg style="left:1049px;top:644px;" width="14" height="15" viewBox="0 0 14 15"><rect x="0.5" y="0.5" width="8" height="5" fill="#e4ecf8" stroke="#6a8ac0"/><path d="M4.5 5.5 V8 M2 10.5 V8 H11 V10.5" stroke="#6a8ac0" fill="none"/><rect x="0.5" y="10.5" width="4" height="3.5" fill="#f8e8a0" stroke="#c0a040"/><rect x="8.5" y="10.5" width="4" height="3.5" fill="#f8e8a0" stroke="#c0a040"/></svg>
<div class="t" style="left:1068px;top:644.84px;font-size:12px;color:#000;font-family:'Liberation Sans', sans-serif;transform:scaleX(0.9820);">Offline Periph...</div>
<svg style="left:750px;top:647px;" width="10" height="10" viewBox="0 0 10 10"><path d="M0.5 0.5 L9.5 9.5 M9.5 0.5 L0.5 9.5" stroke="#1a1a1a" stroke-width="1.1"/></svg>
<svg style="left:1176px;top:645px;" width="11" height="5" viewBox="0 0 11 5"><rect x="0.5" y="0.5" width="9" height="3" fill="none" stroke="#000" stroke-width="1.15"/></svg>
<svg style="left:1199px;top:645px;" width="11" height="11" viewBox="0 0 11 11"><rect x="0.5" y="0.5" width="9" height="9" fill="none" stroke="#000" stroke-width="1.15"/><path d="M0.5 2.5 H9.5" stroke="#000" stroke-width="1.15"/></svg>
<svg style="left:926px;top:669px;" width="12" height="12" viewBox="0 0 12 12"><rect x="0.5" y="0.5" width="11" height="11" rx="1.5" fill="#e02a2a" stroke="#b01a1a"/></svg>
<svg style="left:948px;top:668px;" width="13" height="13" viewBox="0 0 13 13"><path d="M2 2 L11 11 M11 2 L2 11" stroke="#a8a8a8" stroke-width="3"/></svg>
<svg style="left:970px;top:667px;" width="15" height="15" viewBox="0 0 15 15"><path d="M4 4 L13 13 M13 4 L4 13" stroke="#a8a8a8" stroke-width="3"/><path d="M1 1 L7 7 M7 1 L1 7" stroke="#c8c8c8" stroke-width="1.5"/></svg>
<div style="left:991px;top:666px;width:1px;height:17px;background:#9a9a9a;"></div>
<svg style="left:1001px;top:667px;" width="15" height="15" viewBox="0 0 15 15"><path d="M0.5 0.5 H8 L11.5 4 V14.5 H0.5 Z" fill="#f8f8f8" stroke="#9aa0b0"/><path d="M2.5 4 H8 M2.5 6.5 H9 M2.5 9 H9" stroke="#7a8aa8"/><path d="M9 10 L14 15 M14 10 L9 15" stroke="#7a7a7a" stroke-width="1.5"/></svg>
<svg style="left:1024px;top:667px;" width="15" height="15" viewBox="0 0 15 15"><rect x="0.5" y="0.5" width="14" height="14" fill="#f8f8f8" stroke="#a0a8b8"/><path d="M8 1 V14" stroke="#a0a8b8"/><rect x="1.5" y="8" width="6" height="6" rx="1" fill="#e8c040" stroke="#a08020" stroke-width="0.8"/><rect x="10" y="3" width="3" height="2" fill="#4a6ab0"/><rect x="10" y="9" width="3" height="2" fill="#4a6ab0"/></svg>
<svg style="left:1047px;top:667px;" width="15" height="15" viewBox="0 0 15 15"><path d="M0.5 0.5 H10 V14.5 H0.5 Z" fill="#f8f4e8" stroke="#c0a060"/><path d="M2.5 3.5 H8 M2.5 6 H8" stroke="#a09070"/><path d="M13 5 V11 H6 M8.5 8.5 L6 11 L8.5 13.5" fill="none" stroke="#d8a020" stroke-width="1.8"/></svg>
<svg style="left:1070px;top:667px;" width="15" height="15" viewBox="0 0 15 15"><rect x="4.5" y="0.5" width="10" height="8" fill="#eef4fc" stroke="#4a7ac0"/><rect x="0.5" y="4.5" width="10" height="7" fill="#fff" stroke="#4a7ac0"/><path d="M2.5 7 H8 M2.5 9 H7" stroke="#4a7ac0"/><path d="M3 13.5 H8" stroke="#4a7ac0" stroke-width="1.5"/></svg>
<svg style="left:1093px;top:667px;" width="15" height="15" viewBox="0 0 15 15"><rect x="4.5" y="0.5" width="10" height="8" fill="#eef4fc" stroke="#4a7ac0"/><rect x="0.5" y="4.5" width="10" height="7" fill="#fff" stroke="#4a7ac0"/><path d="M8 2 L12 6 M12 2 L8 6" stroke="#e03030" stroke-width="1.3"/><path d="M3 13.5 H8" stroke="#4a7ac0" stroke-width="1.5"/></svg>
<div style="left:1115px;top:666px;width:1px;height:17px;background:#9a9a9a;"></div>
<svg style="left:1125px;top:667px;" width="15" height="15" viewBox="0 0 15 15"><rect x="0.5" y="3.5" width="12" height="10" fill="#eef6fc" stroke="#8a8a7a"/><rect x="1" y="4" width="11" height="2" fill="#3a8ad8"/><path d="M5 11 L9 7" stroke="#2a5a9a" stroke-width="1.1"/><path d="M8.5 4.5 L12 1 L14.5 3.5 L11 7 Z" fill="#3aa040" stroke="#2a7a2a" stroke-width="0.8"/><path d="M7.5 3.8 L11.7 8" stroke="#2a7a2a" stroke-width="1.2"/></svg>
<svg style="left:1149px;top:667px;" width="14" height="15" viewBox="0 0 14 15"><rect x="0.5" y="0.5" width="13" height="10" rx="1" fill="#fff" stroke="#2a5aa0" stroke-width="1.2"/><path d="M3 4 H10 M3 7 H8" stroke="#2a5aa0"/><path d="M4 13.5 H10" stroke="#2a5aa0" stroke-width="2"/></svg>
<svg style="left:1170px;top:673px;" width="8" height="4" viewBox="0 0 8 4"><path d="M0 0 H8 L4 4 Z" fill="#1a1a1a"/></svg>
<svg style="left:1186px;top:667px;" width="16" height="15" viewBox="0 0 16 15"><rect x="0.5" y="2.5" width="13" height="11" fill="#eef6fc" stroke="#a08a4a"/><rect x="1" y="3" width="12" height="2.2" fill="#3a8ad8"/><path d="M3 13 Q10 12.5 12 6" fill="none" stroke="#f0dc98" stroke-width="1.2"/><path d="M10.2 0.6 H12.8 V2.8 H15 V5.4 H12.8 V7.6 H10.2 V5.4 H8 V2.8 H10.2 Z" fill="#fffbe8" stroke="#c8982a" stroke-width="1.1" stroke-linejoin="round"/></svg>
<svg style="left:1208px;top:673px;" width="8" height="4" viewBox="0 0 8 4"><path d="M0 0 H8 L4 4 Z" fill="#1a1a1a"/></svg>
<div class="t" style="left:409px;top:686.84px;font-size:12px;color:#000;font-family:'Liberation Sans', sans-serif;transform:scaleX(0.9402);">kw47evk_wireless_uart_freertos JLink Debug [GDB SEGGER Interface Debugging]</div>
<div style="left:408px;top:700px;width:811px;height:1px;background:#a0a0a0;"></div>
<div style="left:408px;top:701px;width:795px;height:1px;background:#ffffff;"></div>
<div class="t" style="left:410px;top:704.81px;font-size:12px;color:#0000ff;font-family:'Liberation Mono', monospace;transform:scaleX(0.9720);">[MCUXpresso Semihosting Telnet console for &#x27;kw47evk_wireless_uart_freertos JLink Debug&#x27; started on port 57275 @ 1</div>
<div class="t" style="left:410px;top:734.81px;font-size:12px;color:#000;font-family:'Liberation Mono', monospace;transform:scaleX(0.9720);">SEGGER J-Link GDB Server V7.96o - Terminal output channel</div>
<div style="left:1203px;top:701px;width:16px;height:470px;background:#ffffff;"></div>
<div style="left:1203px;top:701px;width:16px;height:470px;background:#f8f8f8;"></div>
<svg style="left:1206px;top:707px;" width="10" height="6" viewBox="0 0 10 6"><path d="M1 5.5 L5 1.5 L9 5.5" fill="none" stroke="#c0c0c0" stroke-width="1.8"/></svg>
<svg style="left:1206px;top:1159px;" width="10" height="6" viewBox="0 0 10 6"><path d="M1 0.5 L5 4.5 L9 0.5" fill="none" stroke="#c0c0c0" stroke-width="1.8"/></svg>
<div style="left:408px;top:1171px;width:795px;height:16px;background:#f0f0f0;"></div>
<div style="left:1203px;top:1171px;width:16px;height:16px;background:#f0f0f0;"></div>
<div style="left:425px;top:1172px;width:704px;height:14px;background:#cdcdcd;"></div>
<svg style="left:411px;top:1174px;" width="6" height="10" viewBox="0 0 6 10"><path d="M5.5 1 L1.5 5 L5.5 9" fill="none" stroke="#606060" stroke-width="1.8"/></svg>
<svg style="left:1191px;top:1174px;" width="6" height="10" viewBox="0 0 6 10"><path d="M0.5 1 L4.5 5 L0.5 9" fill="none" stroke="#606060" stroke-width="1.8"/></svg>
<div style="left:1224px;top:637px;width:303px;height:551px;background:#d9d9d9;"></div>
<div style="left:1225px;top:638px;width:301px;height:549px;background:#ffffff;"></div>
<div style="left:1225px;top:638px;width:301px;height:25px;background:#e5e5e5;"></div>
<div style="left:1225px;top:638px;width:301px;height:25px;background:#f0f0f0;"></div>
<div style="left:1299px;top:638px;width:168px;height:25px;background:#ffffff;"></div>
<div style="left:1467px;top:638px;width:1px;height:25px;background:#d6d6d6;"></div>
<div style="left:1298px;top:638px;width:1px;height:25px;background:#d6d6d6;"></div>
<div style="left:1225px;top:662px;width:74px;height:1px;background:#d6d6d6;"></div>
<div style="left:1467px;top:662px;width:59px;height:1px;background:#d6d6d6;"></div>
<svg style="left:1232px;top:644px;" width="11" height="15" viewBox="0 0 11 15"><rect x="0.5" y="1.5" width="10" height="12" rx="3" fill="#7aa0d8" stroke="#3a5a98"/><ellipse cx="5.5" cy="2.5" rx="5" ry="2" fill="#c0d4f0" stroke="#3a5a98"/><path d="M3 5 V12" stroke="#d8e6f8" stroke-width="1.5"/></svg>
<div class="t" style="left:1249px;top:644.84px;font-size:12px;color:#000;font-family:'Liberation Sans', sans-serif;transform:scaleX(1.0154);">Memory</div>
<svg style="left:1303px;top:646px;" width="17" height="10" viewBox="0 0 17 10"><g fill="none" stroke="#3a8ad0" stroke-width="1.3"><path d="M2.8 0.3 Q0.2 4.5 2.8 8.7"/><path d="M3.8 2.4 L7.6 8.2 M7.6 2.4 L3.8 8.2"/><path d="M8.6 0.3 Q11.2 4.5 8.6 8.7"/></g><rect x="12" y="3.2" width="4.5" height="1.3" fill="#3a8ad0"/><rect x="12" y="5.8" width="4.5" height="1.3" fill="#3a8ad0"/></svg>
<div class="t" style="left:1323px;top:644.84px;font-size:12px;color:#000;font-family:'Liberation Sans', sans-serif;transform:scaleX(0.9400);">Heap and Stack Usage</div>
<svg style="left:1448px;top:647px;" width="10" height="10" viewBox="0 0 10 10"><path d="M0.5 0.5 L9.5 9.5 M9.5 0.5 L0.5 9.5" stroke="#1a1a1a" stroke-width="1.1"/></svg>
<svg style="left:1483px;top:646px;" width="11" height="5" viewBox="0 0 11 5"><rect x="0.5" y="0.5" width="9" height="3" fill="none" stroke="#000" stroke-width="1.15"/></svg>
<svg style="left:1506px;top:646px;" width="11" height="11" viewBox="0 0 11 11"><rect x="0.5" y="0.5" width="9" height="9" fill="none" stroke="#000" stroke-width="1.15"/><path d="M0.5 2.5 H9.5" stroke="#000" stroke-width="1.15"/></svg>
<svg style="left:1329px;top:667px;" width="15" height="15" viewBox="0 0 15 15"><circle cx="7.5" cy="7.5" r="7" fill="#3aa040" stroke="#1a7020"/><path d="M5.5 4 L11 7.5 L5.5 11 Z" fill="#fff"/></svg>
<div class="t" style="left:1353px;top:664.84px;font-size:12px;color:#000;font-family:'Liberation Sans', sans-serif;transform:scaleX(0.8617);">1000</div>
<svg style="left:1434px;top:664px;" width="15" height="21" viewBox="0 0 15 21"><rect x="0.5" y="0.5" width="14" height="20" fill="#f0f0f0" stroke="#a0a0a0"/><path d="M1 10.5 H14" stroke="#c0c0c0"/><path d="M4 7 L7.5 3.5 L11 7 Z M4 14 L7.5 17.5 L11 14 Z" fill="#1a1a1a"/></svg>
<div style="left:1451px;top:665px;width:1px;height:19px;background:#9a9a9a;"></div>
<svg style="left:1461px;top:668px;" width="16" height="15" viewBox="0 0 16 15"><rect x="0.5" y="2.5" width="13" height="11" fill="#eef6fc" stroke="#a08a4a"/><rect x="1" y="3" width="12" height="2.2" fill="#3a8ad8"/><path d="M3 13 Q10 12.5 12 6" fill="none" stroke="#f0dc98" stroke-width="1.2"/><path d="M10.2 0.6 H12.8 V2.8 H15 V5.4 H12.8 V7.6 H10.2 V5.4 H8 V2.8 H10.2 Z" fill="#fffbe8" stroke="#c8982a" stroke-width="1.1" stroke-linejoin="round"/></svg>
<svg style="left:1484px;top:668px;" width="15" height="15" viewBox="0 0 15 15"><rect x="0.5" y="3.5" width="12" height="10" fill="#eef6fc" stroke="#6a88b0"/><rect x="1" y="4" width="11" height="2" fill="#3a8ad8"/><path d="M5 11 L9 7" stroke="#2a5a9a" stroke-width="1.1"/><path d="M8.5 4.5 L12 1 L14.5 3.5 L11 7 Z" fill="#9a9a9a" stroke="#5a5a5a" stroke-width="0.8"/><path d="M7.5 3.8 L11.7 8" stroke="#5a5a5a" stroke-width="1.2"/></svg>
<svg style="left:1513px;top:667px;" width="6" height="15" viewBox="0 0 6 15"><circle cx="3" cy="2.5" r="2" fill="none" stroke="#777" stroke-width="1"/><circle cx="3" cy="7.0" r="2" fill="none" stroke="#777" stroke-width="1"/><circle cx="3" cy="11.5" r="2" fill="none" stroke="#777" stroke-width="1"/></svg>
<div style="left:1347px;top:685px;width:1px;height:484px;background:#e4e4e4;"></div>
<div class="t" style="left:1232px;top:691.34px;font-size:12px;color:#000;font-family:'Liberation Sans', sans-serif;transform:scaleX(0.8841);">Type</div>
<div class="t" style="left:1355px;top:691.34px;font-size:12px;color:#000;font-family:'Liberation Sans', sans-serif;transform:scaleX(0.8998);">Usage (%)</div>
<div style="left:1225px;top:726px;width:301px;height:1px;background:#e4e4e4;"></div>
<div style="left:1225px;top:744px;width:301px;height:1px;background:#e4e4e4;"></div>
<div style="left:1225px;top:762px;width:301px;height:1px;background:#e4e4e4;"></div>
<div style="left:1225px;top:780px;width:301px;height:1px;background:#e4e4e4;"></div>
<div style="left:1225px;top:798px;width:301px;height:1px;background:#e4e4e4;"></div>
<div style="left:1225px;top:816px;width:301px;height:1px;background:#e4e4e4;"></div>
<div style="left:1225px;top:834px;width:301px;height:1px;background:#e4e4e4;"></div>
<div style="left:1225px;top:852px;width:301px;height:1px;background:#e4e4e4;"></div>
<div style="left:1225px;top:870px;width:301px;height:1px;background:#e4e4e4;"></div>
<div style="left:1225px;top:888px;width:301px;height:1px;background:#e4e4e4;"></div>
<div style="left:1225px;top:906px;width:301px;height:1px;background:#e4e4e4;"></div>
<div style="left:1225px;top:924px;width:301px;height:1px;background:#e4e4e4;"></div>
<div style="left:1225px;top:942px;width:301px;height:1px;background:#e4e4e4;"></div>
<div style="left:1225px;top:960px;width:301px;height:1px;background:#e4e4e4;"></div>
<div style="left:1225px;top:978px;width:301px;height:1px;background:#e4e4e4;"></div>
<div style="left:1225px;top:996px;width:301px;height:1px;background:#e4e4e4;"></div>
<div style="left:1225px;top:1014px;width:301px;height:1px;background:#e4e4e4;"></div>
<div style="left:1225px;top:1032px;width:301px;height:1px;background:#e4e4e4;"></div>
<div style="left:1225px;top:1050px;width:301px;height:1px;background:#e4e4e4;"></div>
<div style="left:1225px;top:1068px;width:301px;height:1px;background:#e4e4e4;"></div>
<div style="left:1225px;top:1086px;width:301px;height:1px;background:#e4e4e4;"></div>
<div style="left:1225px;top:1104px;width:301px;height:1px;background:#e4e4e4;"></div>
<div style="left:1225px;top:1122px;width:301px;height:1px;background:#e4e4e4;"></div>
<div style="left:1225px;top:1140px;width:301px;height:1px;background:#e4e4e4;"></div>
<div style="left:1225px;top:1158px;width:301px;height:1px;background:#e4e4e4;"></div>
<div class="t" style="left:1246.5px;top:711.84px;font-size:12px;color:#000;font-family:'Liberation Sans', sans-serif;transform:scaleX(0.9412);">Heap</div>
<div class="t" style="left:1408.5px;top:711.84px;font-size:12px;color:#000;font-family:'Liberation Sans', sans-serif;transform:scaleX(0.9026);">0.00% Used</div>
<div class="t" style="left:1246.5px;top:729.84px;font-size:12px;color:#000;font-family:'Liberation Sans', sans-serif;transform:scaleX(0.9772);">Main Stack</div>
<div class="t" style="left:1408.5px;top:729.84px;font-size:12px;color:#000;font-family:'Liberation Sans', sans-serif;transform:scaleX(0.9026);">0.00% Used</div>
<div style="left:1225px;top:1171px;width:301px;height:16px;background:#f0f0f0;"></div>
<div style="left:1242px;top:1172px;width:86px;height:14px;background:#cdcdcd;"></div>
<svg style="left:1231px;top:1174px;" width="6" height="10" viewBox="0 0 6 10"><path d="M5.5 1 L1.5 5 L5.5 9" fill="none" stroke="#606060" stroke-width="1.8"/></svg>
<svg style="left:1515px;top:1174px;" width="6" height="10" viewBox="0 0 6 10"><path d="M0.5 1 L4.5 5 L0.5 9" fill="none" stroke="#606060" stroke-width="1.8"/></svg>
<div style="left:0px;top:1188px;width:1530px;height:27px;background:#f0f0f0;"></div>
<div style="left:0px;top:1215px;width:1530px;height:2px;background:#c9c9c9;"></div>
<div style="left:576px;top:1188px;width:1px;height:22px;background:#8c8c8c;"></div>
<div style="left:577px;top:1188px;width:1px;height:22px;background:#ffffff;"></div>
<div style="left:710px;top:1188px;width:1px;height:22px;background:#8c8c8c;"></div>
<div style="left:711px;top:1188px;width:1px;height:22px;background:#ffffff;"></div>
<div style="left:838px;top:1188px;width:1px;height:22px;background:#8c8c8c;"></div>
<div style="left:839px;top:1188px;width:1px;height:22px;background:#ffffff;"></div>
<div style="left:170px;top:1214px;width:1px;height:3px;background:#a0a0a0;"></div>
<div class="t" style="left:584px;top:1192.84px;font-size:12px;color:#000;font-family:'Liberation Sans', sans-serif;transform:scaleX(0.9591);">Writable</div>
<div class="t" style="left:717.5px;top:1192.84px;font-size:12px;color:#000;font-family:'Liberation Sans', sans-serif;transform:scaleX(0.9641);">Smart Insert</div>
<div class="t" style="left:846px;top:1192.84px;font-size:12px;color:#000;font-family:'Liberation Sans', sans-serif;transform:scaleX(0.8995);">1 : 1 : 0</div>
<svg style="left:964px;top:1194px;" width="2" height="14" viewBox="0 0 2 14"><rect x="0" y="0" width="1.5" height="1.5" fill="#c0c0c0"/><rect x="0" y="4" width="1.5" height="1.5" fill="#c0c0c0"/><rect x="0" y="8" width="1.5" height="1.5" fill="#c0c0c0"/><rect x="0" y="12" width="1.5" height="1.5" fill="#c0c0c0"/></svg>
<svg style="left:1225px;top:1193px;" width="16" height="16" viewBox="0 0 16 16"><rect x="0.5" y="0.5" width="10" height="7" fill="#a8d0a0" stroke="#5a8a5a"/><rect x="2.5" y="2.5" width="10" height="7" fill="#a8d0a0" stroke="#5a8a5a"/><rect x="4.5" y="4.5" width="10" height="7" fill="#a8d0a0" stroke="#5a8a5a"/><circle cx="11.5" cy="12" r="3.8" fill="#e02a2a"/><path d="M9.8 10.3 L13.2 13.7 M13.2 10.3 L9.8 13.7" stroke="#fff" stroke-width="1"/></svg>
<svg style="left:1250px;top:1194px;" width="2" height="14" viewBox="0 0 2 14"><rect x="0" y="0" width="1.5" height="1.5" fill="#c2b59a"/><rect x="0" y="4" width="1.5" height="1.5" fill="#c2b59a"/><rect x="0" y="8" width="1.5" height="1.5" fill="#c2b59a"/><rect x="0" y="12" width="1.5" height="1.5" fill="#c2b59a"/></svg>
<svg style="left:1258px;top:1194px;" width="15" height="15" viewBox="0 0 15 15"><path d="M4.2 3.2 A5.8 5.8 0 1 0 10.8 3.2" fill="none" stroke="#2a8ad8" stroke-width="1.9"/><path d="M7.5 0.8 V7.5" stroke="#2a8ad8" stroke-width="1.9"/></svg>
<div class="t" style="left:1282px;top:1197.34px;font-size:12px;color:#1f6fd0;font-family:'Liberation Sans', sans-serif;transform:scaleX(0.9321);text-decoration:underline;">NXP</div>
<div class="t" style="left:1308px;top:1197.34px;font-size:12px;color:#1f6fd0;font-family:'Liberation Sans', sans-serif;transform:scaleX(0.9310);text-decoration:underline;">KW47B42ZB7xxxA</div>
<div class="t" style="left:1403px;top:1197.34px;font-size:12px;color:#000;font-family:'Liberation Sans', sans-serif;transform:scaleX(0.9167);">* (</div>
<div class="t" style="left:1415px;top:1197.34px;font-size:12px;color:#1f6fd0;font-family:'Liberation Sans', sans-serif;transform:scaleX(0.9677);text-decoration:underline;">kw47ev...ertos</div>
<div class="t" style="left:1489px;top:1197.34px;font-size:12px;color:#000;font-family:'Liberation Sans', sans-serif;">)</div>
<div style="left:1528px;top:0px;width:1px;height:1215px;background:#d2d2d2;"></div>
<div style="left:1529px;top:0px;width:1px;height:1217px;background:#f6f6f6;"></div></body></html>
